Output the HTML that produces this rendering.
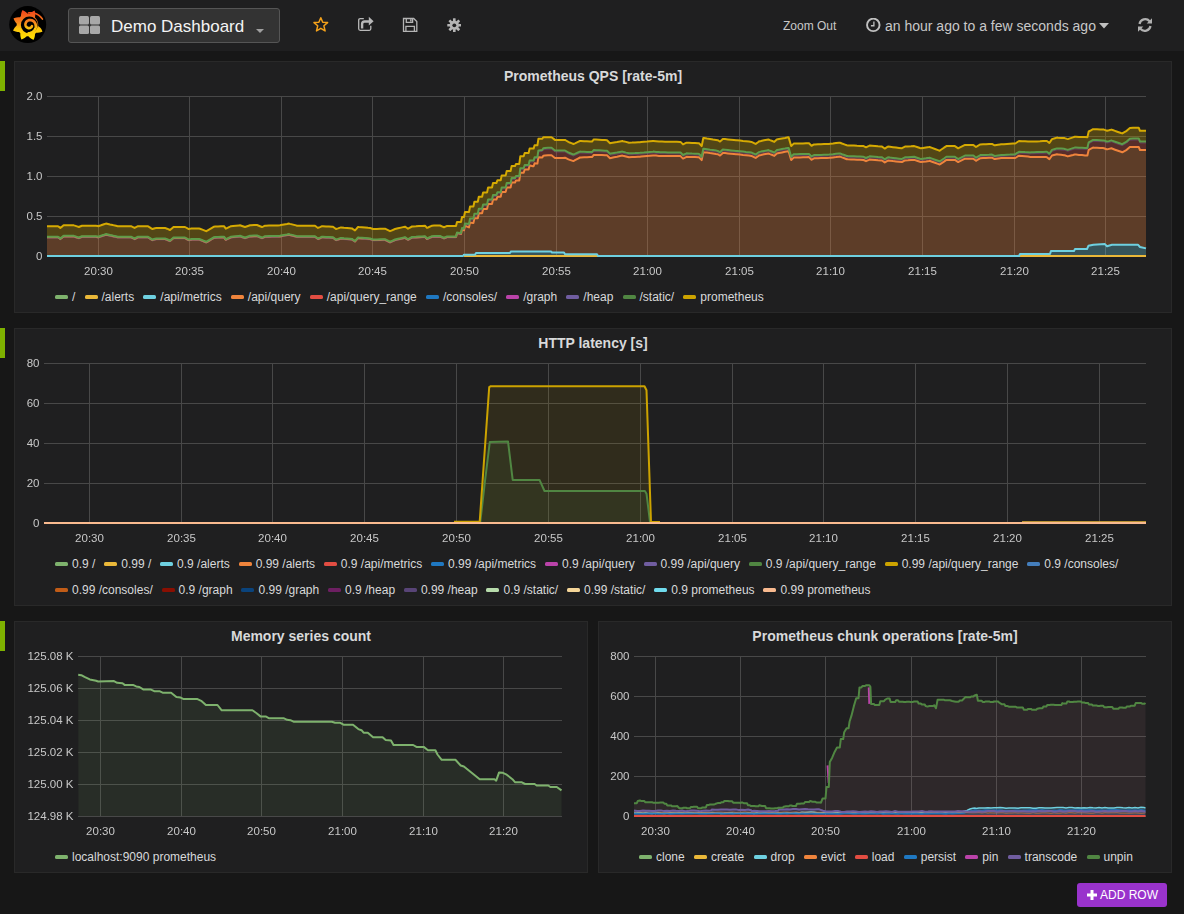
<!DOCTYPE html><html><head><meta charset="utf-8"><style>
*{box-sizing:border-box}
body{margin:0;width:1184px;height:914px;overflow:hidden;background:#171717;font-family:"Liberation Sans",sans-serif;position:relative}
.abs{position:absolute}
.nav{position:absolute;left:0;top:0;width:1184px;height:51px;background:#1f1f20}
.panel{position:absolute;background:#1f1f20;border:1px solid #292929}
.grip{position:absolute;left:0;width:5px;height:30px;background:#7eb100}
.title{position:absolute;left:0;right:0;text-align:center;font-weight:bold;font-size:14px;color:#d8d9da}
.legend{position:absolute;display:flex;flex-wrap:wrap;font-size:12px;color:#d8d9da;white-space:nowrap}
.li{display:flex;align-items:center;margin-right:9.17px;height:26px}
.sw{width:13px;height:4px;border-radius:1.5px;margin-right:4px}
svg text{font-family:"Liberation Sans",sans-serif}
</style></head><body><div class="nav"></div><svg class="abs" style="left:8px;top:5px" width="40" height="40" viewBox="0 0 40 40">
<defs><linearGradient id="lg" gradientUnits="userSpaceOnUse" x1="0" y1="6" x2="0" y2="34"><stop offset="0" stop-color="#f2461c"/><stop offset="0.4" stop-color="#f6841c"/><stop offset="0.62" stop-color="#fbc30e"/><stop offset="1" stop-color="#ffe000"/></linearGradient></defs>
<circle cx="19.7" cy="19.6" r="18.5" fill="#000"/>
<polygon points="30.20,20.00 30.20,20.09 30.20,20.18 30.20,20.27 30.19,20.36 30.19,20.44 30.19,20.53 30.18,20.62 30.18,20.71 30.17,20.80 30.16,20.89 30.21,20.98 30.25,21.08 30.30,21.17 30.46,21.28 30.65,21.40 30.84,21.52 31.02,21.65 31.20,21.77 31.38,21.90 31.54,22.04 31.71,22.17 31.87,22.31 32.03,22.45 32.18,22.59 32.32,22.73 32.47,22.88 32.60,23.03 32.74,23.18 32.86,23.33 32.99,23.48 33.08,23.63 33.17,23.78 33.26,23.93 33.35,24.08 33.43,24.24 33.52,24.39 33.60,24.55 33.68,24.71 33.76,24.87 33.84,25.04 33.91,25.20 33.99,25.37 34.06,25.54 34.13,25.71 34.19,25.88 34.26,26.05 34.32,26.23 34.39,26.40 34.45,26.58 34.32,26.68 34.14,26.75 33.97,26.81 33.79,26.88 33.62,26.94 33.45,27.00 33.27,27.06 33.10,27.11 32.92,27.16 32.75,27.21 32.57,27.26 32.40,27.30 32.23,27.35 32.05,27.39 31.88,27.42 31.71,27.46 31.53,27.49 31.36,27.52 31.19,27.55 31.02,27.57 30.85,27.60 30.68,27.62 30.51,27.63 30.34,27.65 30.17,27.66 30.00,27.67 29.83,27.68 29.66,27.69 29.50,27.69 29.33,27.69 29.17,27.69 29.00,27.69 28.84,27.68 28.67,27.67 28.51,27.66 28.35,27.65 28.26,27.71 28.20,27.78 28.13,27.85 28.06,27.92 27.99,27.99 27.92,28.06 27.85,28.13 27.78,28.20 27.71,28.26 27.63,28.33 27.56,28.40 27.49,28.46 27.41,28.53 27.34,28.59 27.26,28.66 27.19,28.72 27.11,28.78 27.03,28.84 27.02,28.99 27.02,29.15 27.02,29.31 27.01,29.47 27.00,29.64 26.99,29.80 26.98,29.97 26.96,30.13 26.95,30.30 26.93,30.47 26.91,30.63 26.88,30.80 26.85,30.97 26.83,31.14 26.79,31.31 26.76,31.48 26.72,31.65 26.68,31.81 26.64,31.98 26.60,32.15 26.55,32.32 26.50,32.49 26.45,32.66 26.40,32.83 26.34,33.00 26.28,33.17 26.22,33.34 26.16,33.51 26.09,33.68 26.02,33.85 25.95,34.02 25.88,34.19 25.80,34.36 25.72,34.53 25.64,34.70 25.56,34.87 25.40,34.85 25.23,34.77 25.06,34.70 24.89,34.62 24.72,34.54 24.56,34.46 24.39,34.37 24.23,34.29 24.07,34.20 23.91,34.12 23.76,34.03 23.60,33.93 23.45,33.84 23.30,33.75 23.15,33.65 23.00,33.55 22.86,33.45 22.72,33.35 22.58,33.25 22.44,33.15 22.30,33.04 22.16,32.93 22.03,32.83 21.90,32.72 21.77,32.61 21.65,32.50 21.52,32.38 21.40,32.27 21.28,32.15 21.16,32.04 21.04,31.92 20.93,31.80 20.82,31.68 20.71,31.56 20.60,31.44 20.49,31.31 20.39,31.29 20.30,31.30 20.20,31.30 20.10,31.30 20.00,31.30 19.90,31.30 19.80,31.30 19.70,31.30 19.61,31.29 19.51,31.29 19.41,31.28 19.31,31.28 19.21,31.27 19.11,31.27 19.02,31.26 18.92,31.25 18.82,31.24 18.72,31.23 18.61,31.32 18.50,31.43 18.38,31.54 18.26,31.66 18.14,31.77 18.01,31.88 17.89,31.98 17.76,32.09 17.63,32.20 17.50,32.30 17.36,32.40 17.23,32.50 17.09,32.60 16.95,32.70 16.81,32.80 16.67,32.89 16.52,32.99 16.37,33.08 16.22,33.17 16.07,33.26 15.92,33.35 15.76,33.43 15.61,33.52 15.45,33.60 15.29,33.68 15.13,33.76 14.96,33.84 14.80,33.91 14.63,33.99 14.46,34.06 14.29,34.13 14.12,34.19 13.95,34.26 13.77,34.32 13.60,34.39 13.42,34.45 13.32,34.32 13.25,34.14 13.19,33.97 13.12,33.79 13.06,33.62 13.00,33.45 12.94,33.27 12.89,33.10 12.84,32.92 12.79,32.75 12.74,32.57 12.70,32.40 12.65,32.23 12.61,32.05 12.58,31.88 12.54,31.71 12.51,31.53 12.48,31.36 12.45,31.19 12.43,31.02 12.40,30.85 12.38,30.68 12.37,30.51 12.35,30.34 12.34,30.17 12.33,30.00 12.32,29.83 12.31,29.66 12.31,29.50 12.31,29.33 12.31,29.17 12.31,29.00 12.32,28.84 12.33,28.67 12.34,28.51 12.35,28.35 12.29,28.26 12.22,28.20 12.15,28.13 12.08,28.06 12.01,27.99 11.94,27.92 11.87,27.85 11.80,27.78 11.74,27.71 11.67,27.63 11.60,27.56 11.54,27.49 11.47,27.41 11.41,27.34 11.34,27.26 11.28,27.19 11.22,27.11 11.16,27.03 11.01,27.02 10.85,27.02 10.69,27.02 10.53,27.01 10.36,27.00 10.20,26.99 10.03,26.98 9.87,26.96 9.70,26.95 9.53,26.93 9.37,26.91 9.20,26.88 9.03,26.85 8.86,26.83 8.69,26.79 8.52,26.76 8.35,26.72 8.19,26.68 8.02,26.64 7.85,26.60 7.68,26.55 7.51,26.50 7.34,26.45 7.17,26.40 7.00,26.34 6.83,26.28 6.66,26.22 6.49,26.16 6.32,26.09 6.15,26.02 5.98,25.95 5.81,25.88 5.64,25.80 5.47,25.72 5.30,25.64 5.13,25.56 5.15,25.40 5.23,25.23 5.30,25.06 5.38,24.89 5.46,24.72 5.54,24.56 5.63,24.39 5.71,24.23 5.80,24.07 5.88,23.91 5.97,23.76 6.07,23.60 6.16,23.45 6.25,23.30 6.35,23.15 6.45,23.00 6.55,22.86 6.65,22.72 6.75,22.58 6.85,22.44 6.96,22.30 7.07,22.16 7.17,22.03 7.28,21.90 7.39,21.77 7.50,21.65 7.62,21.52 7.73,21.40 7.85,21.28 7.96,21.16 8.08,21.04 8.20,20.93 8.32,20.82 8.44,20.71 8.56,20.60 8.69,20.49 8.71,20.39 8.70,20.30 8.70,20.20 8.70,20.10 8.70,20.00 8.70,19.90 8.70,19.80 8.70,19.70 8.71,19.61 8.71,19.51 8.72,19.41 8.72,19.31 8.73,19.21 8.73,19.11 8.74,19.02 8.75,18.92 8.76,18.82 8.77,18.72 8.68,18.61 8.57,18.50 8.46,18.38 8.34,18.26 8.23,18.14 8.12,18.01 8.02,17.89 7.91,17.76 7.80,17.63 7.70,17.50 7.60,17.36 7.50,17.23 7.40,17.09 7.30,16.95 7.20,16.81 7.11,16.67 7.01,16.52 6.92,16.37 6.83,16.22 6.74,16.07 6.65,15.92 6.57,15.76 6.48,15.61 6.40,15.45 6.32,15.29 6.24,15.13 6.16,14.96 6.09,14.80 6.01,14.63 5.94,14.46 5.87,14.29 5.81,14.12 5.74,13.95 5.68,13.77 5.61,13.60 5.55,13.42 5.68,13.32 5.86,13.25 6.03,13.19 6.21,13.12 6.38,13.06 6.55,13.00 6.73,12.94 6.90,12.89 7.08,12.84 7.25,12.79 7.43,12.74 7.60,12.70 7.77,12.65 7.95,12.61 8.12,12.58 8.29,12.54 8.47,12.51 8.64,12.48 8.81,12.45 8.98,12.43 9.15,12.40 9.32,12.38 9.49,12.37 9.66,12.35 9.83,12.34 10.00,12.33 10.17,12.32 10.34,12.31 10.50,12.31 10.67,12.31 10.83,12.31 11.00,12.31 11.16,12.32 11.33,12.33 11.49,12.34 11.65,12.35 11.74,12.29 11.80,12.22 11.87,12.15 11.94,12.08 12.01,12.01 12.08,11.94 12.15,11.87 12.22,11.80 12.29,11.74 12.37,11.67 12.44,11.60 12.51,11.54 12.59,11.47 12.66,11.41 12.74,11.34 12.81,11.28 12.89,11.22 12.97,11.16 12.98,11.01 12.98,10.85 12.98,10.69 12.99,10.53 13.00,10.36 13.01,10.20 13.02,10.03 13.04,9.87 13.05,9.70 13.07,9.53 13.09,9.37 13.12,9.20 13.15,9.03 13.17,8.86 13.21,8.69 13.24,8.52 13.28,8.35 13.32,8.19 13.36,8.02 13.40,7.85 13.45,7.68 13.50,7.51 13.55,7.34 13.60,7.17 13.66,7.00 13.72,6.83 13.78,6.66 13.84,6.49 13.91,6.32 13.98,6.15 14.05,5.98 14.12,5.81 14.20,5.64 14.28,5.47 14.36,5.30 14.44,5.13 14.60,5.15 14.77,5.23 14.94,5.30 15.11,5.38 15.28,5.46 15.44,5.54 15.61,5.63 15.77,5.71 15.93,5.80 16.09,5.88 16.24,5.97 16.40,6.07 16.55,6.16 16.70,6.25 16.85,6.35 17.00,6.45 17.14,6.55 17.28,6.65 17.42,6.75 17.56,6.85 17.70,6.96 17.84,7.07 17.97,7.17 18.10,7.28 18.23,7.39 18.35,7.50 18.48,7.62 18.60,7.73 18.72,7.85 18.84,7.96 18.96,8.08 19.07,8.20 19.18,8.32 19.29,8.44 19.40,8.56 19.51,8.69 19.61,8.71 19.70,8.70 19.80,8.70 19.90,8.70 20.00,8.70 20.10,8.70 20.20,8.70 20.30,8.70 20.39,8.71 20.49,8.71 20.59,8.72 20.69,8.72 20.79,8.73 20.89,8.73 20.98,8.74 21.08,8.79 21.17,8.83 21.27,8.88 21.37,8.83 21.48,8.74 21.59,8.66 21.71,8.57 21.82,8.48 21.94,8.40 22.06,8.31 22.18,8.22 22.31,8.13 22.43,8.04 22.56,7.95 22.69,7.86 22.82,7.76 22.96,7.67 23.10,7.58 23.24,7.48 23.38,7.39 23.52,7.29 23.67,7.20 23.82,7.10 23.97,7.01 24.13,6.91 24.28,6.81 24.44,6.72 24.61,6.62 24.77,6.52 24.94,6.43 25.11,6.32 25.29,6.22 25.47,6.12 25.65,6.02 25.83,5.92 26.01,5.83 26.20,5.74 26.39,5.65 26.58,5.56 26.67,5.70 26.72,5.91 26.78,6.11 26.83,6.31 26.87,6.51 26.92,6.71 26.96,6.91 27.00,7.11 27.03,7.31 27.07,7.51 27.10,7.71 27.12,7.91 27.15,8.11 27.17,8.31 27.18,8.50 27.20,8.70 27.21,8.90 27.22,9.09 27.23,9.29 27.23,9.48 27.23,9.67 27.23,9.87 27.22,10.06 27.22,10.25 27.21,10.44 27.19,10.63 27.18,10.81 27.16,11.00 27.14,11.19 27.11,11.37 27.09,11.56 27.06,11.74 27.02,11.92 26.99,12.10 26.95,12.28 26.91,12.46 26.96,12.54 27.02,12.60 27.09,12.66 27.15,12.72 27.21,12.79 27.28,12.85 27.34,12.91 27.40,12.98 27.46,13.04 27.52,13.11 27.58,13.17 27.64,13.24 27.70,13.31 27.76,13.38 27.81,13.44 27.87,13.51 27.93,13.58 27.98,13.65 28.04,13.72 28.09,13.79 28.15,13.86 28.20,13.93 28.25,14.00 28.30,14.08 28.36,14.15 28.41,14.22 28.46,14.30 28.51,14.37 28.55,14.44 28.60,14.52 28.65,14.59 28.70,14.67 28.74,14.75 28.79,14.82 28.83,14.90 28.88,14.98 28.92,15.05 28.96,15.13 29.01,15.21 29.05,15.29 29.09,15.37 29.13,15.45 29.17,15.53 29.21,15.61 29.24,15.69 29.28,15.77 29.32,15.85 29.35,15.93 29.39,16.01 29.42,16.10 29.46,16.18 29.49,16.26 29.52,16.34 29.55,16.43 29.58,16.51 29.61,16.60 29.64,16.68 29.67,16.76 29.70,16.85 29.73,16.93 29.75,17.02 29.78,17.10 29.80,17.19 29.83,17.27 29.85,17.36 29.88,17.45 29.90,17.53 29.92,17.62 29.94,17.71 29.96,17.79 29.98,17.88 30.00,17.97 30.01,18.05 30.03,18.14 30.05,18.23 30.06,18.32 30.07,18.40 30.09,18.49 30.10,18.58 30.11,18.67 30.12,18.76 30.13,18.85 30.14,18.93 30.15,19.02 30.16,19.11 30.17,19.20 30.18,19.29 30.18,19.38 30.19,19.47 30.19,19.56 30.19,19.64 30.20,19.73 30.20,19.82 30.20,19.91" fill="url(#lg)"/>
<circle cx="21.3" cy="20" r="8.4" fill="#000"/>
<polyline points="23.93,21.23 23.80,21.47 23.66,21.70 23.50,21.92 23.31,22.12 23.11,22.31 22.90,22.48 22.66,22.64 22.42,22.77 22.16,22.88 21.89,22.97 21.61,23.04 21.33,23.08 21.04,23.10 20.74,23.09 20.45,23.05 20.15,22.99 19.86,22.90 19.58,22.79 19.30,22.64 19.03,22.47 18.78,22.28 18.54,22.06 18.33,21.81 18.13,21.55 17.95,21.26 17.80,20.95 17.68,20.63 17.58,20.29 17.52,19.94 17.48,19.58 17.48,19.21 17.52,18.84 17.59,18.47 17.69,18.10 17.83,17.74 18.01,17.38 18.22,17.04 18.47,16.71 18.75,16.40 19.06,16.12 19.40,15.86 19.78,15.63 20.17,15.44 20.59,15.28 21.04,15.15 21.49,15.07 21.96,15.03 22.45,15.04 22.93,15.09 23.42,15.19 23.90,15.33 24.38,15.52 24.84,15.76 25.28,16.05 25.71,16.38 26.10,16.76 26.47,17.18 26.80,17.64 27.09,18.13 27.33,18.66 27.53,19.22 27.67,19.81 27.76,20.41 27.80,21.03 27.78,21.66 27.69,22.29 27.54,22.93 27.34,23.56 27.06,24.17 26.73,24.76 26.34,25.33 25.89,25.87 25.38,26.37 24.82,26.83 24.20,27.24 23.55,27.59 22.85,27.88 22.12,28.11 21.35,28.28 20.57,28.37" fill="none" stroke="url(#lg)" stroke-width="2.7" stroke-linecap="round"/>
<polyline points="20.42,8.01 21.01,7.89 21.61,7.81 22.22,7.75 22.83,7.72 23.46,7.73 24.09,7.77 24.73,7.84 25.37,7.94 26.01,8.08 26.65,8.25 27.28,8.46 27.92,8.70 28.54,8.97 29.16,9.28 29.76,9.62 30.36,10.00 30.94,10.41 31.50,10.85 32.05,11.32 32.58,11.83 33.09,12.37 33.57,12.94 34.03,13.53 34.46,14.16" fill="none" stroke="url(#lg)" stroke-width="1.6" stroke-linecap="round"/>
</svg><div class="abs" style="left:68px;top:8px;width:212px;height:35px;background:#333;border:1px solid #555;border-radius:3px"></div><svg class="abs" style="left:79px;top:16px" width="22" height="19"><g fill="#a8a8a8">
<rect x="0" y="0" width="10" height="8.5" rx="1.5"/><rect x="11" y="0" width="10" height="8.5" rx="1.5"/>
<rect x="0" y="9.5" width="10" height="8.5" rx="1.5"/><rect x="11" y="9.5" width="10" height="8.5" rx="1.5"/></g></svg><div class="abs" style="left:111px;top:17px;font-size:17px;color:#f4f4f4;line-height:20px">Demo Dashboard</div><svg class="abs" style="left:256px;top:29px" width="9" height="5"><path d="M0 0h8l-4 4z" fill="#a0a0a0"/></svg><svg class="abs" style="left:312px;top:16px" width="18" height="18" viewBox="0 0 18 18"><path d="M8.8 1.8 10.75 6.2 15.6 6.6 11.9 9.8 13.1 14.9 8.8 12.3 4.5 14.9 5.7 9.8 2 6.6 6.85 6.2z" fill="none" stroke="#f4a11a" stroke-width="1.5" stroke-linejoin="round"/></svg><svg class="abs" style="left:352px;top:12px" width="26" height="24" viewBox="0 0 26 24"><g fill="none" stroke="#b8b8b8"><path d="M11.8 6.7H8.2Q6.7 6.7 6.7 8.2V16.8Q6.7 18.3 8.2 18.3H17.3Q18.8 18.3 18.8 16.8V13.7" stroke-width="1.3"/><path d="M10.1 16.4V12.1Q10.1 9.45 12.7 9.45H17.6" stroke-width="2.4"/></g><path d="M16.8 4.8 21.6 9.3 16.8 13.5z" fill="#b8b8b8"/></svg><svg class="abs" style="left:402px;top:17px" width="16" height="16" viewBox="0 0 16 16"><g fill="none" stroke="#b4b4b4" stroke-width="1.3"><path d="M1.5 1.5H11.7L14.8 4.6V14.3H1.5z"/><path d="M4.3 1.5V5.3H10.6V1.5"/><path d="M3.9 14.3V9.3H12.4V14.3"/></g><rect x="8.1" y="2.2" width="1.5" height="2.4" fill="#b4b4b4"/></svg><svg class="abs" style="left:446.7px;top:17.7px" width="14.6" height="14.6" viewBox="0 0 16 16"><g fill="#b4b4b4"><rect x="6.55" y="0.3" width="2.9" height="3.5" rx="0.4" transform="rotate(0 8 8)"/><rect x="6.55" y="0.3" width="2.9" height="3.5" rx="0.4" transform="rotate(45 8 8)"/><rect x="6.55" y="0.3" width="2.9" height="3.5" rx="0.4" transform="rotate(90 8 8)"/><rect x="6.55" y="0.3" width="2.9" height="3.5" rx="0.4" transform="rotate(135 8 8)"/><rect x="6.55" y="0.3" width="2.9" height="3.5" rx="0.4" transform="rotate(180 8 8)"/><rect x="6.55" y="0.3" width="2.9" height="3.5" rx="0.4" transform="rotate(225 8 8)"/><rect x="6.55" y="0.3" width="2.9" height="3.5" rx="0.4" transform="rotate(270 8 8)"/><rect x="6.55" y="0.3" width="2.9" height="3.5" rx="0.4" transform="rotate(315 8 8)"/><circle cx="8" cy="8" r="5.1"/></g><circle cx="8" cy="8" r="2.1" fill="#1f1f20"/></svg><div class="abs" style="left:783px;top:19px;font-size:12px;color:#c8c8c8;line-height:15px">Zoom Out</div><svg class="abs" style="left:866px;top:18px" width="15" height="15" viewBox="0 0 15 15"><circle cx="7.3" cy="6.9" r="6.25" fill="none" stroke="#c0c0c0" stroke-width="1.9"/><path d="M7.9 3.6V7.75H4.9" fill="none" stroke="#c0c0c0" stroke-width="1.3"/></svg><div class="abs" style="left:885px;top:17px;font-size:14px;color:#c8c8c8;line-height:18px">an hour ago to a few seconds ago</div><svg class="abs" style="left:1099px;top:23px" width="10" height="6"><path d="M0 0h10l-5 5.5z" fill="#c0c0c0"/></svg><svg class="abs" style="left:1137px;top:17px" width="16" height="16" viewBox="0 0 16 16"><path d="M2.5 7A5.8 5.8 0 0 1 12.6 4.2" fill="none" stroke="#b0b0b0" stroke-width="2.2"/><path d="M15 1.2V6.5H9.7z" fill="#b0b0b0"/><path d="M13.5 9A5.8 5.8 0 0 1 3.4 11.8" fill="none" stroke="#b0b0b0" stroke-width="2.2"/><path d="M1 14.8V9.5H6.3z" fill="#b0b0b0"/></svg><div class="grip" style="top:61px"></div><div class="panel" style="left:14px;top:61px;width:1158px;height:252px"></div><div class="title" style="left:14px;width:1158px;top:68px;line-height:16px">Prometheus QPS [rate-5m]</div><div class="grip" style="top:328px"></div><div class="panel" style="left:14px;top:328px;width:1158px;height:278px"></div><div class="title" style="left:14px;width:1158px;top:335px;line-height:16px">HTTP latency [s]</div><div class="grip" style="top:621px"></div><div class="panel" style="left:14px;top:621px;width:574px;height:252px"></div><div class="title" style="left:14px;width:574px;top:628px;line-height:16px">Memory series count</div><div class="panel" style="left:598px;top:621px;width:574px;height:252px"></div><div class="title" style="left:598px;width:574px;top:628px;line-height:16px">Prometheus chunk operations [rate-5m]</div><svg class="abs" style="left:0;top:0" width="1184" height="914"><line x1="47" y1="96.5" x2="1146" y2="96.5" stroke="#484848" stroke-width="1"/><line x1="47" y1="136.5" x2="1146" y2="136.5" stroke="#484848" stroke-width="1"/><line x1="47" y1="176.5" x2="1146" y2="176.5" stroke="#484848" stroke-width="1"/><line x1="47" y1="216.5" x2="1146" y2="216.5" stroke="#484848" stroke-width="1"/><line x1="47" y1="256.5" x2="1146" y2="256.5" stroke="#484848" stroke-width="1"/><line x1="98.5" y1="96.5" x2="98.5" y2="256.5" stroke="#484848" stroke-width="1"/><line x1="189.5" y1="96.5" x2="189.5" y2="256.5" stroke="#484848" stroke-width="1"/><line x1="281.5" y1="96.5" x2="281.5" y2="256.5" stroke="#484848" stroke-width="1"/><line x1="372.5" y1="96.5" x2="372.5" y2="256.5" stroke="#484848" stroke-width="1"/><line x1="464.5" y1="96.5" x2="464.5" y2="256.5" stroke="#484848" stroke-width="1"/><line x1="556.5" y1="96.5" x2="556.5" y2="256.5" stroke="#484848" stroke-width="1"/><line x1="647.5" y1="96.5" x2="647.5" y2="256.5" stroke="#484848" stroke-width="1"/><line x1="739.5" y1="96.5" x2="739.5" y2="256.5" stroke="#484848" stroke-width="1"/><line x1="830.5" y1="96.5" x2="830.5" y2="256.5" stroke="#484848" stroke-width="1"/><line x1="922.5" y1="96.5" x2="922.5" y2="256.5" stroke="#484848" stroke-width="1"/><line x1="1014.5" y1="96.5" x2="1014.5" y2="256.5" stroke="#484848" stroke-width="1"/><line x1="1105.5" y1="96.5" x2="1105.5" y2="256.5" stroke="#484848" stroke-width="1"/><line x1="44" y1="363.5" x2="1146" y2="363.5" stroke="#484848" stroke-width="1"/><line x1="44" y1="403.5" x2="1146" y2="403.5" stroke="#484848" stroke-width="1"/><line x1="44" y1="443.5" x2="1146" y2="443.5" stroke="#484848" stroke-width="1"/><line x1="44" y1="483.5" x2="1146" y2="483.5" stroke="#484848" stroke-width="1"/><line x1="44" y1="523.5" x2="1146" y2="523.5" stroke="#484848" stroke-width="1"/><line x1="89.5" y1="363.5" x2="89.5" y2="523.5" stroke="#484848" stroke-width="1"/><line x1="181.5" y1="363.5" x2="181.5" y2="523.5" stroke="#484848" stroke-width="1"/><line x1="272.5" y1="363.5" x2="272.5" y2="523.5" stroke="#484848" stroke-width="1"/><line x1="364.5" y1="363.5" x2="364.5" y2="523.5" stroke="#484848" stroke-width="1"/><line x1="456.5" y1="363.5" x2="456.5" y2="523.5" stroke="#484848" stroke-width="1"/><line x1="548.5" y1="363.5" x2="548.5" y2="523.5" stroke="#484848" stroke-width="1"/><line x1="640.5" y1="363.5" x2="640.5" y2="523.5" stroke="#484848" stroke-width="1"/><line x1="732.5" y1="363.5" x2="732.5" y2="523.5" stroke="#484848" stroke-width="1"/><line x1="823.5" y1="363.5" x2="823.5" y2="523.5" stroke="#484848" stroke-width="1"/><line x1="915.5" y1="363.5" x2="915.5" y2="523.5" stroke="#484848" stroke-width="1"/><line x1="1007.5" y1="363.5" x2="1007.5" y2="523.5" stroke="#484848" stroke-width="1"/><line x1="1099.5" y1="363.5" x2="1099.5" y2="523.5" stroke="#484848" stroke-width="1"/><line x1="78" y1="656.5" x2="562" y2="656.5" stroke="#484848" stroke-width="1"/><line x1="78" y1="688.5" x2="562" y2="688.5" stroke="#484848" stroke-width="1"/><line x1="78" y1="720.5" x2="562" y2="720.5" stroke="#484848" stroke-width="1"/><line x1="78" y1="752.5" x2="562" y2="752.5" stroke="#484848" stroke-width="1"/><line x1="78" y1="784.5" x2="562" y2="784.5" stroke="#484848" stroke-width="1"/><line x1="78" y1="816.5" x2="562" y2="816.5" stroke="#484848" stroke-width="1"/><line x1="100.5" y1="656.5" x2="100.5" y2="816.5" stroke="#484848" stroke-width="1"/><line x1="181.5" y1="656.5" x2="181.5" y2="816.5" stroke="#484848" stroke-width="1"/><line x1="261.5" y1="656.5" x2="261.5" y2="816.5" stroke="#484848" stroke-width="1"/><line x1="342.5" y1="656.5" x2="342.5" y2="816.5" stroke="#484848" stroke-width="1"/><line x1="423.5" y1="656.5" x2="423.5" y2="816.5" stroke="#484848" stroke-width="1"/><line x1="503.5" y1="656.5" x2="503.5" y2="816.5" stroke="#484848" stroke-width="1"/><line x1="634" y1="656.5" x2="1146" y2="656.5" stroke="#484848" stroke-width="1"/><line x1="634" y1="696.5" x2="1146" y2="696.5" stroke="#484848" stroke-width="1"/><line x1="634" y1="736.5" x2="1146" y2="736.5" stroke="#484848" stroke-width="1"/><line x1="634" y1="776.5" x2="1146" y2="776.5" stroke="#484848" stroke-width="1"/><line x1="634" y1="816.5" x2="1146" y2="816.5" stroke="#484848" stroke-width="1"/><line x1="655.5" y1="656.5" x2="655.5" y2="816.5" stroke="#484848" stroke-width="1"/><line x1="740.5" y1="656.5" x2="740.5" y2="816.5" stroke="#484848" stroke-width="1"/><line x1="825.5" y1="656.5" x2="825.5" y2="816.5" stroke="#484848" stroke-width="1"/><line x1="911.5" y1="656.5" x2="911.5" y2="816.5" stroke="#484848" stroke-width="1"/><line x1="996.5" y1="656.5" x2="996.5" y2="816.5" stroke="#484848" stroke-width="1"/><line x1="1081.5" y1="656.5" x2="1081.5" y2="816.5" stroke="#484848" stroke-width="1"/><polygon points="47.0,256.5 47.0,256.0 463.0,256.0 464.0,254.7 475.0,254.7 476.0,253.0 510.0,253.0 511.0,251.4 551.0,251.4 552.0,252.5 564.0,252.5 565.0,254.2 597.0,254.2 598.0,256.0 1019.0,256.0 1020.0,254.0 1050.0,254.0 1051.0,250.9 1074.0,250.9 1075.0,249.1 1087.0,249.1 1088.4,245.8 1093.4,244.7 1104.9,244.1 1107.0,246.3 1112.0,244.7 1137.9,244.7 1140.0,247.0 1146.0,248.4 1146.0,256.5" fill="#6ed0e0" fill-opacity="0.3"/><polygon points="47.0,256.0 463.0,256.0 464.0,254.7 475.0,254.7 476.0,253.0 510.0,253.0 511.0,251.4 551.0,251.4 552.0,252.5 564.0,252.5 565.0,254.2 597.0,254.2 598.0,256.0 1019.0,256.0 1020.0,254.0 1050.0,254.0 1051.0,250.9 1074.0,250.9 1075.0,249.1 1087.0,249.1 1088.4,245.8 1093.4,244.7 1104.9,244.1 1107.0,246.3 1112.0,244.7 1137.9,244.7 1140.0,247.0 1146.0,248.4 1146.0,150.1 1145.0,150.1 1142.0,150.0 1140.0,150.0 1139.0,147.6 1138.7,146.9 1136.0,146.9 1133.0,146.9 1130.0,146.9 1129.9,146.9 1127.0,149.5 1126.7,149.8 1124.0,151.3 1122.3,152.3 1121.0,151.8 1118.0,150.8 1116.6,150.3 1115.0,149.7 1112.0,148.5 1111.5,148.3 1109.0,148.9 1107.0,149.4 1106.0,149.0 1103.9,148.2 1103.0,148.1 1100.0,148.0 1097.0,147.8 1094.0,147.7 1093.0,147.6 1091.0,148.6 1088.7,149.8 1088.0,152.9 1087.4,155.5 1085.0,155.4 1082.0,155.1 1079.0,154.9 1076.0,154.6 1074.7,154.5 1073.0,155.0 1070.0,155.8 1067.8,156.4 1067.0,156.1 1064.6,155.2 1064.0,155.2 1061.0,154.8 1058.0,154.4 1057.0,154.3 1055.0,154.8 1052.0,155.5 1049.4,159.2 1049.0,158.9 1046.9,157.2 1046.0,157.1 1043.0,157.1 1040.0,157.0 1037.0,157.0 1034.0,156.9 1031.0,156.9 1030.4,156.9 1028.0,156.6 1025.0,156.3 1022.0,156.0 1019.0,155.7 1016.0,157.5 1015.2,158.0 1013.0,158.0 1010.0,158.1 1007.0,158.1 1004.0,158.1 1001.0,158.1 1000.0,158.2 998.0,158.5 995.0,159.0 994.6,159.1 992.0,157.7 989.0,157.8 986.0,157.9 983.0,158.0 980.2,158.2 980.0,158.3 977.0,160.2 976.0,160.8 974.0,159.2 973.4,158.7 971.0,158.7 968.0,158.7 965.0,158.7 962.0,160.2 959.0,161.7 958.2,162.1 956.0,160.6 954.9,159.9 953.0,159.9 950.0,159.9 947.0,159.9 946.4,159.9 944.0,161.6 941.0,163.6 939.7,164.5 938.0,163.9 935.0,162.8 932.0,161.7 929.5,160.8 929.0,160.9 926.0,161.4 923.0,161.8 921.0,162.1 920.0,161.8 917.0,160.8 914.3,159.9 914.0,160.0 911.0,160.1 908.0,160.3 905.0,160.4 902.0,162.0 901.7,162.1 899.0,161.8 896.0,161.4 893.0,161.1 890.0,160.7 888.0,160.5 887.0,161.1 884.8,162.5 884.0,161.9 882.0,160.5 881.0,160.4 878.0,160.2 875.0,159.9 872.0,159.7 869.6,159.5 869.0,159.8 866.0,161.2 863.6,160.0 863.0,160.0 860.0,159.8 857.0,159.7 854.0,159.5 851.0,159.4 848.0,159.3 846.8,159.2 845.0,158.5 842.0,157.4 840.0,156.6 839.0,156.7 836.0,157.1 833.0,157.4 830.0,157.7 829.2,157.8 827.0,157.9 824.0,158.0 821.0,158.1 818.0,158.2 815.0,158.3 814.0,158.3 812.0,159.5 811.5,159.7 809.0,157.1 806.0,157.2 803.0,157.3 800.0,157.4 797.0,157.5 794.0,157.5 793.7,157.6 791.2,160.1 791.0,159.4 788.6,151.2 788.0,151.3 785.0,151.8 782.0,152.4 779.0,153.0 776.8,153.4 776.0,154.2 774.3,155.9 773.0,155.3 770.0,154.1 768.4,153.4 767.0,153.7 764.0,154.3 761.0,155.0 759.0,155.4 758.0,156.2 755.7,157.9 755.0,157.6 752.0,156.1 751.5,155.9 749.0,155.6 746.0,155.3 743.0,155.0 740.0,154.6 737.0,154.3 736.0,154.2 734.0,154.0 731.0,153.7 728.0,153.4 725.0,153.1 722.8,152.9 722.0,153.7 720.0,155.6 719.0,155.0 717.7,154.2 716.0,154.0 713.0,153.5 710.0,153.1 707.0,152.6 704.0,152.2 703.3,152.0 701.7,160.1 701.0,159.4 699.0,157.3 698.0,157.2 695.0,157.1 692.0,157.0 689.0,156.9 686.5,156.8 686.0,157.1 683.0,158.6 680.5,156.1 680.0,156.1 677.0,156.1 674.0,156.0 671.0,156.0 668.0,156.0 665.0,156.0 662.0,156.0 660.0,155.9 659.0,155.9 656.0,155.6 653.5,155.4 653.0,155.4 650.0,155.7 647.0,156.0 644.0,156.3 641.0,156.6 640.0,156.7 638.0,156.8 635.0,156.9 632.0,157.1 629.0,157.3 626.0,156.5 623.0,155.8 622.4,155.6 620.0,156.0 617.0,156.7 614.0,157.3 611.0,157.9 610.0,158.2 608.0,156.2 607.0,155.3 605.0,155.2 602.0,155.1 599.0,155.0 596.0,155.0 593.7,154.9 593.0,155.8 592.0,157.0 590.0,157.0 587.0,157.2 584.0,157.3 581.0,157.5 580.0,157.5 578.0,158.6 575.0,160.2 573.4,161.1 572.0,160.6 569.0,159.6 568.4,159.4 566.0,158.2 565.0,157.7 563.0,157.9 560.0,158.0 557.0,158.0 555.0,158.0 554.0,157.2 551.5,155.3 551.0,155.3 548.0,155.3 545.0,155.6 543.3,155.8 542.3,157.5 542.0,157.5 539.0,157.2 538.4,157.2 537.4,163.6 536.0,163.4 534.6,163.2 533.6,166.3 533.0,166.2 530.0,165.5 529.6,165.4 528.6,169.6 527.0,169.5 524.7,169.5 524.0,171.8 523.7,172.8 521.0,172.8 520.3,172.8 519.3,180.4 518.0,180.4 516.0,180.4 515.0,182.6 512.0,182.6 511.6,182.6 510.6,187.5 509.0,187.5 506.7,187.5 506.0,190.6 505.7,191.9 503.0,191.9 501.7,191.9 500.7,196.8 500.0,196.8 497.4,196.8 497.0,197.9 496.4,199.6 494.0,199.6 493.0,199.6 492.0,203.9 491.0,203.9 488.1,203.9 488.0,204.4 487.1,208.9 485.0,208.9 483.1,208.9 482.1,213.2 482.0,213.2 479.0,213.2 478.8,213.2 477.8,218.2 476.0,218.2 474.4,218.2 473.4,223.1 473.0,223.1 470.0,222.4 469.0,227.4 467.0,226.6 465.0,225.7 464.0,230.3 462.0,229.4 461.0,234.0 458.0,233.3 457.0,233.2 456.0,237.1 455.0,237.1 452.0,237.1 449.0,237.1 447.0,237.1 446.0,237.5 444.0,238.3 443.0,237.9 440.0,236.6 437.0,236.7 434.0,236.7 432.0,236.8 431.0,237.2 428.0,238.6 427.0,239.0 425.0,236.8 422.0,237.0 419.0,237.2 416.0,237.4 413.0,237.5 412.0,237.6 410.0,238.7 408.0,239.8 407.0,239.1 405.0,237.8 404.0,238.0 401.0,238.7 398.0,239.4 395.0,240.1 392.0,241.4 390.0,242.3 389.0,241.8 386.0,240.3 385.0,239.8 383.0,239.8 380.0,239.9 377.0,240.0 374.0,240.1 373.0,240.1 371.0,239.4 370.0,239.0 368.0,238.8 365.0,238.6 362.0,238.4 359.0,238.2 358.0,238.1 356.0,240.4 355.0,241.5 353.0,240.2 352.0,239.5 350.0,239.3 347.0,239.0 344.0,238.8 341.0,238.5 338.0,239.5 336.0,240.1 335.0,239.3 333.0,237.8 332.0,237.8 329.0,237.6 326.0,237.5 323.0,237.3 322.0,237.3 320.0,238.2 318.0,239.0 317.0,238.3 315.0,236.8 314.0,236.8 311.0,236.8 308.0,236.8 305.0,236.8 302.0,236.8 299.0,236.8 297.0,236.8 296.0,236.5 293.0,235.7 290.0,235.0 289.0,234.7 287.0,235.1 284.0,235.6 281.0,236.2 280.0,236.4 278.0,236.5 275.0,236.5 272.0,236.6 269.0,236.7 266.0,236.8 265.0,236.8 263.0,237.7 262.0,238.1 260.0,237.3 257.0,236.1 254.0,236.2 251.0,236.4 250.0,236.4 248.0,237.1 245.0,238.1 242.0,237.1 240.0,236.4 239.0,236.5 236.0,236.8 233.0,237.1 231.0,237.3 230.0,237.8 227.0,239.2 225.8,239.8 224.0,237.3 221.0,237.4 218.0,237.6 215.0,237.7 214.0,237.8 212.0,239.0 209.0,240.8 206.4,242.3 206.0,242.2 203.0,241.0 200.0,239.9 198.8,239.5 197.0,239.5 194.0,239.5 192.0,239.5 191.0,239.7 188.6,240.1 188.0,239.8 185.0,238.1 182.0,238.1 179.0,238.1 176.0,238.1 173.4,238.1 173.0,238.5 170.0,241.1 167.0,239.8 165.0,239.0 164.0,239.0 161.0,239.0 158.0,239.0 156.5,239.0 155.0,239.4 152.3,240.1 152.0,239.9 149.0,238.0 148.0,237.3 146.0,237.3 143.0,237.3 140.0,237.3 138.0,237.3 137.0,237.8 134.6,239.0 134.0,238.7 131.0,237.3 128.0,237.3 125.0,237.3 122.0,237.3 119.0,237.3 117.7,237.3 116.0,236.9 113.0,236.2 112.6,236.1 110.0,235.6 107.0,234.9 105.9,234.7 104.0,235.3 101.0,236.4 98.3,237.3 98.0,237.2 95.7,236.8 95.0,236.8 92.0,236.8 89.0,236.8 86.0,236.8 83.0,236.8 82.0,236.8 80.0,237.6 78.9,238.1 77.0,237.5 74.0,236.5 73.8,236.4 71.0,236.4 68.0,236.4 65.0,236.4 63.6,236.4 62.0,237.7 60.3,239.0 59.0,238.0 58.0,237.3 56.0,237.3 53.0,237.3 50.0,237.3 47.0,237.3" fill="#ef843c" fill-opacity="0.3"/><polygon points="47.0,237.3 50.0,237.3 53.0,237.3 56.0,237.3 58.0,237.3 59.0,238.0 60.3,239.0 62.0,237.7 63.6,236.4 65.0,236.4 68.0,236.4 71.0,236.4 73.8,236.4 74.0,236.5 77.0,237.5 78.9,238.1 80.0,237.6 82.0,236.8 83.0,236.8 86.0,236.8 89.0,236.8 92.0,236.8 95.0,236.8 95.7,236.8 98.0,237.2 98.3,237.3 101.0,236.4 104.0,235.3 105.9,234.7 107.0,234.9 110.0,235.6 112.6,236.1 113.0,236.2 116.0,236.9 117.7,237.3 119.0,237.3 122.0,237.3 125.0,237.3 128.0,237.3 131.0,237.3 134.0,238.7 134.6,239.0 137.0,237.8 138.0,237.3 140.0,237.3 143.0,237.3 146.0,237.3 148.0,237.3 149.0,238.0 152.0,239.9 152.3,240.1 155.0,239.4 156.5,239.0 158.0,239.0 161.0,239.0 164.0,239.0 165.0,239.0 167.0,239.8 170.0,241.1 173.0,238.5 173.4,238.1 176.0,238.1 179.0,238.1 182.0,238.1 185.0,238.1 188.0,239.8 188.6,240.1 191.0,239.7 192.0,239.5 194.0,239.5 197.0,239.5 198.8,239.5 200.0,239.9 203.0,241.0 206.0,242.2 206.4,242.3 209.0,240.8 212.0,239.0 214.0,237.8 215.0,237.7 218.0,237.6 221.0,237.4 224.0,237.3 225.8,239.8 227.0,239.2 230.0,237.8 231.0,237.3 233.0,237.1 236.0,236.8 239.0,236.5 240.0,236.4 242.0,237.1 245.0,238.1 248.0,237.1 250.0,236.4 251.0,236.4 254.0,236.2 257.0,236.1 260.0,237.3 262.0,238.1 263.0,237.7 265.0,236.8 266.0,236.8 269.0,236.7 272.0,236.6 275.0,236.5 278.0,236.5 280.0,236.4 281.0,236.2 284.0,235.6 287.0,235.1 289.0,234.7 290.0,235.0 293.0,235.7 296.0,236.5 297.0,236.8 299.0,236.8 302.0,236.8 305.0,236.8 308.0,236.8 311.0,236.8 314.0,236.8 315.0,236.8 317.0,238.3 318.0,239.0 320.0,238.2 322.0,237.3 323.0,237.3 326.0,237.5 329.0,237.6 332.0,237.8 333.0,237.8 335.0,239.3 336.0,240.1 338.0,239.5 341.0,238.5 344.0,238.8 347.0,239.0 350.0,239.3 352.0,239.5 353.0,240.2 355.0,241.5 356.0,240.4 358.0,238.1 359.0,238.2 362.0,238.4 365.0,238.6 368.0,238.8 370.0,239.0 371.0,239.4 373.0,240.1 374.0,240.1 377.0,240.0 380.0,239.9 383.0,239.8 385.0,239.8 386.0,240.3 389.0,241.8 390.0,242.3 392.0,241.4 395.0,240.1 398.0,239.4 401.0,238.7 404.0,238.0 405.0,237.8 407.0,239.1 408.0,239.8 410.0,238.7 412.0,237.6 413.0,237.5 416.0,237.4 419.0,237.2 422.0,237.0 425.0,236.8 427.0,239.0 428.0,238.6 431.0,237.2 432.0,236.8 434.0,236.7 437.0,236.7 440.0,236.6 443.0,237.9 444.0,238.3 446.0,237.5 447.0,237.1 449.0,237.1 452.0,237.1 455.0,237.1 456.0,237.1 457.0,233.2 458.0,233.3 461.0,234.0 462.0,229.4 464.0,230.3 465.0,225.7 467.0,226.6 469.0,227.4 470.0,222.4 473.0,223.1 473.4,223.1 474.4,218.2 476.0,218.2 477.8,218.2 478.8,213.2 479.0,213.2 482.0,213.2 482.1,213.2 483.1,208.9 485.0,208.9 487.1,208.9 488.0,204.4 488.1,203.9 491.0,203.9 492.0,203.9 493.0,199.6 494.0,199.6 496.4,199.6 497.0,197.9 497.4,196.8 500.0,196.8 500.7,196.8 501.7,191.9 503.0,191.9 505.7,191.9 506.0,190.6 506.7,187.5 509.0,187.5 510.6,187.5 511.6,182.6 512.0,182.6 515.0,182.6 516.0,180.4 518.0,180.4 519.3,180.4 520.3,172.8 521.0,172.8 523.7,172.8 524.0,171.8 524.7,169.5 527.0,169.5 528.6,169.6 529.6,165.4 530.0,165.5 533.0,166.2 533.6,166.3 534.6,163.2 536.0,163.4 537.4,163.6 538.4,157.2 539.0,157.2 542.0,157.5 542.3,157.5 543.3,155.8 545.0,155.6 548.0,155.3 551.0,155.3 551.5,155.3 554.0,157.2 555.0,158.0 557.0,158.0 560.0,158.0 563.0,157.9 565.0,157.7 566.0,158.2 568.4,159.4 569.0,159.6 572.0,160.6 573.4,161.1 575.0,160.2 578.0,158.6 580.0,157.5 581.0,157.5 584.0,157.3 587.0,157.2 590.0,157.0 592.0,157.0 593.0,155.8 593.7,154.9 596.0,155.0 599.0,155.0 602.0,155.1 605.0,155.2 607.0,155.3 608.0,156.2 610.0,158.2 611.0,157.9 614.0,157.3 617.0,156.7 620.0,156.0 622.4,155.6 623.0,155.8 626.0,156.5 629.0,157.3 632.0,157.1 635.0,156.9 638.0,156.8 640.0,156.7 641.0,156.6 644.0,156.3 647.0,156.0 650.0,155.7 653.0,155.4 653.5,155.4 656.0,155.6 659.0,155.9 660.0,155.9 662.0,156.0 665.0,156.0 668.0,156.0 671.0,156.0 674.0,156.0 677.0,156.1 680.0,156.1 680.5,156.1 683.0,158.6 686.0,157.1 686.5,156.8 689.0,156.9 692.0,157.0 695.0,157.1 698.0,157.2 699.0,157.3 701.0,159.4 701.7,160.1 703.3,152.0 704.0,152.2 707.0,152.6 710.0,153.1 713.0,153.5 716.0,154.0 717.7,154.2 719.0,155.0 720.0,155.6 722.0,153.7 722.8,152.9 725.0,153.1 728.0,153.4 731.0,153.7 734.0,154.0 736.0,154.2 737.0,154.3 740.0,154.6 743.0,155.0 746.0,155.3 749.0,155.6 751.5,155.9 752.0,156.1 755.0,157.6 755.7,157.9 758.0,156.2 759.0,155.4 761.0,155.0 764.0,154.3 767.0,153.7 768.4,153.4 770.0,154.1 773.0,155.3 774.3,155.9 776.0,154.2 776.8,153.4 779.0,153.0 782.0,152.4 785.0,151.8 788.0,151.3 788.6,151.2 791.0,159.4 791.2,160.1 793.7,157.6 794.0,157.5 797.0,157.5 800.0,157.4 803.0,157.3 806.0,157.2 809.0,157.1 811.5,159.7 812.0,159.5 814.0,158.3 815.0,158.3 818.0,158.2 821.0,158.1 824.0,158.0 827.0,157.9 829.2,157.8 830.0,157.7 833.0,157.4 836.0,157.1 839.0,156.7 840.0,156.6 842.0,157.4 845.0,158.5 846.8,159.2 848.0,159.3 851.0,159.4 854.0,159.5 857.0,159.7 860.0,159.8 863.0,160.0 863.6,160.0 866.0,161.2 869.0,159.8 869.6,159.5 872.0,159.7 875.0,159.9 878.0,160.2 881.0,160.4 882.0,160.5 884.0,161.9 884.8,162.5 887.0,161.1 888.0,160.5 890.0,160.7 893.0,161.1 896.0,161.4 899.0,161.8 901.7,162.1 902.0,162.0 905.0,160.4 908.0,160.3 911.0,160.1 914.0,160.0 914.3,159.9 917.0,160.8 920.0,161.8 921.0,162.1 923.0,161.8 926.0,161.4 929.0,160.9 929.5,160.8 932.0,161.7 935.0,162.8 938.0,163.9 939.7,164.5 941.0,163.6 944.0,161.6 946.4,159.9 947.0,159.9 950.0,159.9 953.0,159.9 954.9,159.9 956.0,160.6 958.2,162.1 959.0,161.7 962.0,160.2 965.0,158.7 968.0,158.7 971.0,158.7 973.4,158.7 974.0,159.2 976.0,160.8 977.0,160.2 980.0,158.3 980.2,158.2 983.0,158.0 986.0,157.9 989.0,157.8 992.0,157.7 994.6,159.1 995.0,159.0 998.0,158.5 1000.0,158.2 1001.0,158.1 1004.0,158.1 1007.0,158.1 1010.0,158.1 1013.0,158.0 1015.2,158.0 1016.0,157.5 1019.0,155.7 1022.0,156.0 1025.0,156.3 1028.0,156.6 1030.4,156.9 1031.0,156.9 1034.0,156.9 1037.0,157.0 1040.0,157.0 1043.0,157.1 1046.0,157.1 1046.9,157.2 1049.0,158.9 1049.4,159.2 1052.0,155.5 1055.0,154.8 1057.0,154.3 1058.0,154.4 1061.0,154.8 1064.0,155.2 1064.6,155.2 1067.0,156.1 1067.8,156.4 1070.0,155.8 1073.0,155.0 1074.7,154.5 1076.0,154.6 1079.0,154.9 1082.0,155.1 1085.0,155.4 1087.4,155.5 1088.0,152.9 1088.7,149.8 1091.0,148.6 1093.0,147.6 1094.0,147.7 1097.0,147.8 1100.0,148.0 1103.0,148.1 1103.9,148.2 1106.0,149.0 1107.0,149.4 1109.0,148.9 1111.5,148.3 1112.0,148.5 1115.0,149.7 1116.6,150.3 1118.0,150.8 1121.0,151.8 1122.3,152.3 1124.0,151.3 1126.7,149.8 1127.0,149.5 1129.9,146.9 1130.0,146.9 1133.0,146.9 1136.0,146.9 1138.7,146.9 1139.0,147.6 1140.0,150.0 1142.0,150.0 1145.0,150.1 1146.0,150.1 1146.0,141.6 1145.0,141.6 1142.0,141.6 1140.0,141.6 1139.0,139.2 1138.7,138.5 1136.0,138.6 1133.0,138.6 1130.0,138.7 1129.9,138.7 1127.0,141.3 1126.7,141.6 1124.0,143.2 1122.3,144.2 1121.0,143.8 1118.0,142.8 1116.6,142.3 1115.0,141.7 1112.0,140.6 1111.5,140.4 1109.0,141.1 1107.0,141.6 1106.0,141.2 1103.9,140.4 1103.0,140.4 1100.0,140.2 1097.0,140.1 1094.0,140.0 1093.0,140.0 1091.0,141.1 1088.7,142.3 1088.0,145.3 1087.4,148.0 1085.0,147.9 1082.0,147.8 1079.0,147.7 1076.0,147.6 1074.7,147.6 1073.0,148.1 1070.0,149.1 1067.8,149.9 1067.0,149.6 1064.6,148.9 1064.0,148.8 1061.0,148.6 1058.0,148.4 1057.0,148.4 1055.0,149.0 1052.0,149.9 1049.4,153.7 1049.0,153.4 1046.9,151.8 1046.0,151.8 1043.0,151.9 1040.0,152.0 1037.0,152.1 1034.0,152.2 1031.0,152.3 1030.4,152.4 1028.0,152.2 1025.0,152.1 1022.0,151.9 1019.0,151.8 1016.0,153.7 1015.2,154.3 1013.0,154.4 1010.0,154.6 1007.0,154.7 1004.0,154.9 1001.0,155.1 1000.0,155.2 998.0,155.5 995.0,156.0 994.6,156.0 992.0,154.6 989.0,154.8 986.0,154.9 983.0,155.0 980.2,155.1 980.0,155.3 977.0,157.1 976.0,157.7 974.0,156.1 973.4,155.6 971.0,155.6 968.0,155.6 965.0,155.6 962.0,157.1 959.0,158.6 958.2,159.0 956.0,157.6 954.9,156.8 953.0,156.8 950.0,156.8 947.0,156.8 946.4,156.8 944.0,158.5 941.0,160.5 939.7,161.4 938.0,160.8 935.0,159.7 932.0,158.6 929.5,157.7 929.0,157.8 926.0,158.3 923.0,158.7 921.0,159.0 920.0,158.7 917.0,157.7 914.3,156.8 914.0,156.8 911.0,157.0 908.0,157.2 905.0,157.3 902.0,158.9 901.7,159.0 899.0,158.7 896.0,158.3 893.0,157.9 890.0,157.6 888.0,157.3 887.0,157.9 884.8,159.3 884.0,158.7 882.0,157.3 881.0,157.2 878.0,157.0 875.0,156.7 872.0,156.5 869.6,156.3 869.0,156.6 866.0,158.0 863.6,156.8 863.0,156.8 860.0,156.6 857.0,156.5 854.0,156.3 851.0,156.2 848.0,156.1 846.8,156.0 845.0,155.3 842.0,154.2 840.0,153.4 839.0,153.5 836.0,153.8 833.0,154.2 830.0,154.5 829.2,154.6 827.0,154.7 824.0,154.8 821.0,154.9 818.0,155.0 815.0,155.1 814.0,155.1 812.0,156.2 811.5,156.5 809.0,153.9 806.0,154.0 803.0,154.0 800.0,154.1 797.0,154.2 794.0,154.3 793.7,154.3 791.2,156.8 791.0,156.1 788.6,147.9 788.0,148.0 785.0,148.6 782.0,149.1 779.0,149.7 776.8,150.1 776.0,150.9 774.3,152.6 773.0,152.0 770.0,150.8 768.4,150.1 767.0,150.4 764.0,151.0 761.0,151.6 759.0,152.1 758.0,152.8 755.7,154.6 755.0,154.2 752.0,152.8 751.5,152.6 749.0,152.3 746.0,152.0 743.0,151.6 740.0,151.3 737.0,151.0 736.0,150.9 734.0,150.7 731.0,150.4 728.0,150.1 725.0,149.8 722.8,149.6 722.0,150.3 720.0,152.3 719.0,151.6 717.7,150.9 716.0,150.6 713.0,150.1 710.0,149.7 707.0,149.2 704.0,148.8 703.3,148.7 701.7,156.8 701.0,156.0 699.0,153.9 698.0,153.8 695.0,153.7 692.0,153.6 689.0,153.4 686.5,153.3 686.0,153.6 683.0,155.0 680.5,152.5 680.0,152.5 677.0,152.5 674.0,152.4 671.0,152.4 668.0,152.4 665.0,152.3 662.0,152.3 660.0,152.2 659.0,152.1 656.0,151.9 653.5,151.6 653.0,151.7 650.0,151.9 647.0,152.2 644.0,152.5 641.0,152.7 640.0,152.8 638.0,152.9 635.0,153.1 632.0,153.2 629.0,153.3 626.0,152.6 623.0,151.8 622.4,151.6 620.0,152.0 617.0,152.6 614.0,153.1 611.0,153.6 610.0,153.8 608.0,151.8 607.0,150.8 605.0,150.7 602.0,150.5 599.0,150.3 596.0,150.2 593.7,150.0 593.0,150.9 592.0,152.1 590.0,152.0 587.0,151.9 584.0,151.8 581.0,151.7 580.0,151.6 578.0,152.5 575.0,153.9 573.4,154.6 572.0,154.0 569.0,152.8 568.4,152.5 566.0,151.1 565.0,150.5 563.0,150.5 560.0,150.5 557.0,150.5 555.0,150.5 554.0,149.7 551.5,147.8 551.0,147.8 548.0,147.8 545.0,148.1 543.3,148.3 542.3,150.0 542.0,150.0 539.0,150.4 538.4,150.4 537.4,157.0 536.0,157.2 534.6,157.3 533.6,160.6 533.0,160.6 530.0,160.6 529.6,160.6 528.6,165.0 527.0,165.0 524.7,165.0 524.0,167.3 523.7,168.3 521.0,168.3 520.3,168.3 519.3,175.9 518.0,175.9 516.0,175.9 515.0,178.1 512.0,178.1 511.6,178.1 510.6,183.0 509.0,183.0 506.7,183.0 506.0,186.1 505.7,187.4 503.0,187.4 501.7,187.4 500.7,192.3 500.0,192.3 497.4,192.3 497.0,193.4 496.4,195.1 494.0,195.1 493.0,195.1 492.0,199.4 491.0,199.4 488.1,199.4 488.0,199.9 487.1,204.4 485.0,204.4 483.1,204.4 482.1,208.7 482.0,208.7 479.0,208.7 478.8,208.7 477.8,213.7 476.0,213.7 474.4,213.7 473.4,218.6 473.0,218.6 470.0,218.6 469.0,223.9 467.0,223.7 465.0,223.5 464.0,228.4 462.0,228.1 461.0,233.0 458.0,232.7 457.0,232.6 456.0,236.5 455.0,236.5 452.0,236.5 449.0,236.5 447.0,236.5 446.0,236.9 444.0,237.7 443.0,237.3 440.0,236.0 437.0,236.1 434.0,236.1 432.0,236.2 431.0,236.6 428.0,238.0 427.0,238.4 425.0,236.2 422.0,236.4 419.0,236.6 416.0,236.8 413.0,236.9 412.0,237.0 410.0,238.1 408.0,239.2 407.0,238.5 405.0,237.2 404.0,237.4 401.0,238.1 398.0,238.8 395.0,239.5 392.0,240.8 390.0,241.7 389.0,241.2 386.0,239.7 385.0,239.2 383.0,239.2 380.0,239.3 377.0,239.4 374.0,239.5 373.0,239.5 371.0,238.8 370.0,238.4 368.0,238.2 365.0,238.0 362.0,237.8 359.0,237.6 358.0,237.5 356.0,239.8 355.0,240.9 353.0,239.6 352.0,238.9 350.0,238.7 347.0,238.4 344.0,238.2 341.0,237.9 338.0,238.9 336.0,239.5 335.0,238.7 333.0,237.2 332.0,237.2 329.0,237.0 326.0,236.9 323.0,236.7 322.0,236.7 320.0,237.6 318.0,238.4 317.0,237.7 315.0,236.2 314.0,236.2 311.0,236.2 308.0,236.2 305.0,236.2 302.0,236.2 299.0,236.2 297.0,236.2 296.0,235.9 293.0,235.1 290.0,234.4 289.0,234.1 287.0,234.5 284.0,235.0 281.0,235.6 280.0,235.8 278.0,235.9 275.0,235.9 272.0,236.0 269.0,236.1 266.0,236.2 265.0,236.2 263.0,237.1 262.0,237.5 260.0,236.7 257.0,235.5 254.0,235.6 251.0,235.8 250.0,235.8 248.0,236.5 245.0,237.5 242.0,236.5 240.0,235.8 239.0,235.9 236.0,236.2 233.0,236.5 231.0,236.7 230.0,237.2 227.0,238.6 225.8,239.2 224.0,236.7 221.0,236.8 218.0,237.0 215.0,237.1 214.0,237.2 212.0,238.4 209.0,240.2 206.4,241.7 206.0,241.6 203.0,240.4 200.0,239.3 198.8,238.9 197.0,238.9 194.0,238.9 192.0,238.9 191.0,239.1 188.6,239.5 188.0,239.2 185.0,237.5 182.0,237.5 179.0,237.5 176.0,237.5 173.4,237.5 173.0,237.9 170.0,240.5 167.0,239.2 165.0,238.4 164.0,238.4 161.0,238.4 158.0,238.4 156.5,238.4 155.0,238.8 152.3,239.5 152.0,239.3 149.0,237.4 148.0,236.7 146.0,236.7 143.0,236.7 140.0,236.7 138.0,236.7 137.0,237.2 134.6,238.4 134.0,238.1 131.0,236.7 128.0,236.7 125.0,236.7 122.0,236.7 119.0,236.7 117.7,236.7 116.0,236.3 113.0,235.6 112.6,235.5 110.0,235.0 107.0,234.3 105.9,234.1 104.0,234.8 101.0,235.8 98.3,236.7 98.0,236.6 95.7,236.2 95.0,236.2 92.0,236.2 89.0,236.2 86.0,236.2 83.0,236.2 82.0,236.2 80.0,237.0 78.9,237.5 77.0,236.9 74.0,235.9 73.8,235.8 71.0,235.8 68.0,235.8 65.0,235.8 63.6,235.8 62.0,237.1 60.3,238.4 59.0,237.4 58.0,236.7 56.0,236.7 53.0,236.7 50.0,236.7 47.0,236.7" fill="#dd4e41" fill-opacity="0.3"/><polygon points="47.0,236.7 50.0,236.7 53.0,236.7 56.0,236.7 58.0,236.7 59.0,237.4 60.3,238.4 62.0,237.1 63.6,235.8 65.0,235.8 68.0,235.8 71.0,235.8 73.8,235.8 74.0,235.9 77.0,236.9 78.9,237.5 80.0,237.0 82.0,236.2 83.0,236.2 86.0,236.2 89.0,236.2 92.0,236.2 95.0,236.2 95.7,236.2 98.0,236.6 98.3,236.7 101.0,235.8 104.0,234.8 105.9,234.1 107.0,234.3 110.0,235.0 112.6,235.5 113.0,235.6 116.0,236.3 117.7,236.7 119.0,236.7 122.0,236.7 125.0,236.7 128.0,236.7 131.0,236.7 134.0,238.1 134.6,238.4 137.0,237.2 138.0,236.7 140.0,236.7 143.0,236.7 146.0,236.7 148.0,236.7 149.0,237.4 152.0,239.3 152.3,239.5 155.0,238.8 156.5,238.4 158.0,238.4 161.0,238.4 164.0,238.4 165.0,238.4 167.0,239.2 170.0,240.5 173.0,237.9 173.4,237.5 176.0,237.5 179.0,237.5 182.0,237.5 185.0,237.5 188.0,239.2 188.6,239.5 191.0,239.1 192.0,238.9 194.0,238.9 197.0,238.9 198.8,238.9 200.0,239.3 203.0,240.4 206.0,241.6 206.4,241.7 209.0,240.2 212.0,238.4 214.0,237.2 215.0,237.1 218.0,237.0 221.0,236.8 224.0,236.7 225.8,239.2 227.0,238.6 230.0,237.2 231.0,236.7 233.0,236.5 236.0,236.2 239.0,235.9 240.0,235.8 242.0,236.5 245.0,237.5 248.0,236.5 250.0,235.8 251.0,235.8 254.0,235.6 257.0,235.5 260.0,236.7 262.0,237.5 263.0,237.1 265.0,236.2 266.0,236.2 269.0,236.1 272.0,236.0 275.0,235.9 278.0,235.9 280.0,235.8 281.0,235.6 284.0,235.0 287.0,234.5 289.0,234.1 290.0,234.4 293.0,235.1 296.0,235.9 297.0,236.2 299.0,236.2 302.0,236.2 305.0,236.2 308.0,236.2 311.0,236.2 314.0,236.2 315.0,236.2 317.0,237.7 318.0,238.4 320.0,237.6 322.0,236.7 323.0,236.7 326.0,236.9 329.0,237.0 332.0,237.2 333.0,237.2 335.0,238.7 336.0,239.5 338.0,238.9 341.0,237.9 344.0,238.2 347.0,238.4 350.0,238.7 352.0,238.9 353.0,239.6 355.0,240.9 356.0,239.8 358.0,237.5 359.0,237.6 362.0,237.8 365.0,238.0 368.0,238.2 370.0,238.4 371.0,238.8 373.0,239.5 374.0,239.5 377.0,239.4 380.0,239.3 383.0,239.2 385.0,239.2 386.0,239.7 389.0,241.2 390.0,241.7 392.0,240.8 395.0,239.5 398.0,238.8 401.0,238.1 404.0,237.4 405.0,237.2 407.0,238.5 408.0,239.2 410.0,238.1 412.0,237.0 413.0,236.9 416.0,236.8 419.0,236.6 422.0,236.4 425.0,236.2 427.0,238.4 428.0,238.0 431.0,236.6 432.0,236.2 434.0,236.1 437.0,236.1 440.0,236.0 443.0,237.3 444.0,237.7 446.0,236.9 447.0,236.5 449.0,236.5 452.0,236.5 455.0,236.5 456.0,236.5 457.0,232.6 458.0,232.7 461.0,233.0 462.0,228.1 464.0,228.4 465.0,223.5 467.0,223.7 469.0,223.9 470.0,218.6 473.0,218.6 473.4,218.6 474.4,213.7 476.0,213.7 477.8,213.7 478.8,208.7 479.0,208.7 482.0,208.7 482.1,208.7 483.1,204.4 485.0,204.4 487.1,204.4 488.0,199.9 488.1,199.4 491.0,199.4 492.0,199.4 493.0,195.1 494.0,195.1 496.4,195.1 497.0,193.4 497.4,192.3 500.0,192.3 500.7,192.3 501.7,187.4 503.0,187.4 505.7,187.4 506.0,186.1 506.7,183.0 509.0,183.0 510.6,183.0 511.6,178.1 512.0,178.1 515.0,178.1 516.0,175.9 518.0,175.9 519.3,175.9 520.3,168.3 521.0,168.3 523.7,168.3 524.0,167.3 524.7,165.0 527.0,165.0 528.6,165.0 529.6,160.6 530.0,160.6 533.0,160.6 533.6,160.6 534.6,157.3 536.0,157.2 537.4,157.0 538.4,150.4 539.0,150.4 542.0,150.0 542.3,150.0 543.3,148.3 545.0,148.1 548.0,147.8 551.0,147.8 551.5,147.8 554.0,149.7 555.0,150.5 557.0,150.5 560.0,150.5 563.0,150.5 565.0,150.5 566.0,151.1 568.4,152.5 569.0,152.8 572.0,154.0 573.4,154.6 575.0,153.9 578.0,152.5 580.0,151.6 581.0,151.7 584.0,151.8 587.0,151.9 590.0,152.0 592.0,152.1 593.0,150.9 593.7,150.0 596.0,150.2 599.0,150.3 602.0,150.5 605.0,150.7 607.0,150.8 608.0,151.8 610.0,153.8 611.0,153.6 614.0,153.1 617.0,152.6 620.0,152.0 622.4,151.6 623.0,151.8 626.0,152.6 629.0,153.3 632.0,153.2 635.0,153.1 638.0,152.9 640.0,152.8 641.0,152.7 644.0,152.5 647.0,152.2 650.0,151.9 653.0,151.7 653.5,151.6 656.0,151.9 659.0,152.1 660.0,152.2 662.0,152.3 665.0,152.3 668.0,152.4 671.0,152.4 674.0,152.4 677.0,152.5 680.0,152.5 680.5,152.5 683.0,155.0 686.0,153.6 686.5,153.3 689.0,153.4 692.0,153.6 695.0,153.7 698.0,153.8 699.0,153.9 701.0,156.0 701.7,156.8 703.3,148.7 704.0,148.8 707.0,149.2 710.0,149.7 713.0,150.1 716.0,150.6 717.7,150.9 719.0,151.6 720.0,152.3 722.0,150.3 722.8,149.6 725.0,149.8 728.0,150.1 731.0,150.4 734.0,150.7 736.0,150.9 737.0,151.0 740.0,151.3 743.0,151.6 746.0,152.0 749.0,152.3 751.5,152.6 752.0,152.8 755.0,154.2 755.7,154.6 758.0,152.8 759.0,152.1 761.0,151.6 764.0,151.0 767.0,150.4 768.4,150.1 770.0,150.8 773.0,152.0 774.3,152.6 776.0,150.9 776.8,150.1 779.0,149.7 782.0,149.1 785.0,148.6 788.0,148.0 788.6,147.9 791.0,156.1 791.2,156.8 793.7,154.3 794.0,154.3 797.0,154.2 800.0,154.1 803.0,154.0 806.0,154.0 809.0,153.9 811.5,156.5 812.0,156.2 814.0,155.1 815.0,155.1 818.0,155.0 821.0,154.9 824.0,154.8 827.0,154.7 829.2,154.6 830.0,154.5 833.0,154.2 836.0,153.8 839.0,153.5 840.0,153.4 842.0,154.2 845.0,155.3 846.8,156.0 848.0,156.1 851.0,156.2 854.0,156.3 857.0,156.5 860.0,156.6 863.0,156.8 863.6,156.8 866.0,158.0 869.0,156.6 869.6,156.3 872.0,156.5 875.0,156.7 878.0,157.0 881.0,157.2 882.0,157.3 884.0,158.7 884.8,159.3 887.0,157.9 888.0,157.3 890.0,157.6 893.0,157.9 896.0,158.3 899.0,158.7 901.7,159.0 902.0,158.9 905.0,157.3 908.0,157.2 911.0,157.0 914.0,156.8 914.3,156.8 917.0,157.7 920.0,158.7 921.0,159.0 923.0,158.7 926.0,158.3 929.0,157.8 929.5,157.7 932.0,158.6 935.0,159.7 938.0,160.8 939.7,161.4 941.0,160.5 944.0,158.5 946.4,156.8 947.0,156.8 950.0,156.8 953.0,156.8 954.9,156.8 956.0,157.6 958.2,159.0 959.0,158.6 962.0,157.1 965.0,155.6 968.0,155.6 971.0,155.6 973.4,155.6 974.0,156.1 976.0,157.7 977.0,157.1 980.0,155.3 980.2,155.1 983.0,155.0 986.0,154.9 989.0,154.8 992.0,154.6 994.6,156.0 995.0,156.0 998.0,155.5 1000.0,155.2 1001.0,155.1 1004.0,154.9 1007.0,154.7 1010.0,154.6 1013.0,154.4 1015.2,154.3 1016.0,153.7 1019.0,151.8 1022.0,151.9 1025.0,152.1 1028.0,152.2 1030.4,152.4 1031.0,152.3 1034.0,152.2 1037.0,152.1 1040.0,152.0 1043.0,151.9 1046.0,151.8 1046.9,151.8 1049.0,153.4 1049.4,153.7 1052.0,149.9 1055.0,149.0 1057.0,148.4 1058.0,148.4 1061.0,148.6 1064.0,148.8 1064.6,148.9 1067.0,149.6 1067.8,149.9 1070.0,149.1 1073.0,148.1 1074.7,147.6 1076.0,147.6 1079.0,147.7 1082.0,147.8 1085.0,147.9 1087.4,148.0 1088.0,145.3 1088.7,142.3 1091.0,141.1 1093.0,140.0 1094.0,140.0 1097.0,140.1 1100.0,140.2 1103.0,140.4 1103.9,140.4 1106.0,141.2 1107.0,141.6 1109.0,141.1 1111.5,140.4 1112.0,140.6 1115.0,141.7 1116.6,142.3 1118.0,142.8 1121.0,143.8 1122.3,144.2 1124.0,143.2 1126.7,141.6 1127.0,141.3 1129.9,138.7 1130.0,138.7 1133.0,138.6 1136.0,138.6 1138.7,138.5 1139.0,139.2 1140.0,141.6 1142.0,141.6 1145.0,141.6 1146.0,141.6 1146.0,130.8 1145.0,130.8 1142.0,130.8 1140.0,130.8 1139.0,128.4 1138.7,127.7 1136.0,127.8 1133.0,127.8 1130.0,127.9 1129.9,127.9 1127.0,130.5 1126.7,130.8 1124.0,132.4 1122.3,133.4 1121.0,133.0 1118.0,132.0 1116.6,131.5 1115.0,130.9 1112.0,129.8 1111.5,129.6 1109.0,130.3 1107.0,130.8 1106.0,130.4 1103.9,129.6 1103.0,129.6 1100.0,129.5 1097.0,129.3 1094.0,129.2 1093.0,129.2 1091.0,130.3 1088.7,131.5 1088.0,134.6 1087.4,137.2 1085.0,137.1 1082.0,137.0 1079.0,136.9 1076.0,136.8 1074.7,136.8 1073.0,137.4 1070.0,138.4 1067.8,139.1 1067.0,138.9 1064.6,138.1 1064.0,138.1 1061.0,137.9 1058.0,137.7 1057.0,137.6 1055.0,138.2 1052.0,139.1 1049.4,142.9 1049.0,142.6 1046.9,141.0 1046.0,141.0 1043.0,141.1 1040.0,141.3 1037.0,141.4 1034.0,141.5 1031.0,141.6 1030.4,141.6 1028.0,141.5 1025.0,141.3 1022.0,141.2 1019.0,141.0 1016.0,143.0 1015.2,143.5 1013.0,143.6 1010.0,143.8 1007.0,144.0 1004.0,144.2 1001.0,144.3 1000.0,144.4 998.0,144.7 995.0,145.2 994.6,145.3 992.0,143.9 989.0,144.0 986.0,144.2 983.0,144.3 980.2,144.4 980.0,144.5 977.0,146.4 976.0,147.0 974.0,145.4 973.4,144.9 971.0,144.9 968.0,144.9 965.0,144.9 962.0,146.4 959.0,147.9 958.2,148.3 956.0,146.8 954.9,146.1 953.0,146.1 950.0,146.1 947.0,146.1 946.4,146.1 944.0,147.7 941.0,149.8 939.7,150.7 938.0,150.1 935.0,149.0 932.0,147.9 929.5,147.0 929.0,147.1 926.0,147.5 923.0,148.0 921.0,148.3 920.0,148.0 917.0,147.0 914.3,146.1 914.0,146.1 911.0,146.3 908.0,146.4 905.0,146.6 902.0,148.1 901.7,148.3 899.0,148.0 896.0,147.6 893.0,147.2 890.0,146.8 888.0,146.6 887.0,147.2 884.8,148.6 884.0,148.0 882.0,146.6 881.0,146.5 878.0,146.3 875.0,146.0 872.0,145.8 869.6,145.6 869.0,145.9 866.0,147.3 863.6,146.1 863.0,146.1 860.0,145.9 857.0,145.8 854.0,145.6 851.0,145.5 848.0,145.4 846.8,145.3 845.0,144.6 842.0,143.5 840.0,142.7 839.0,142.8 836.0,143.1 833.0,143.5 830.0,143.8 829.2,143.9 827.0,144.0 824.0,144.1 821.0,144.2 818.0,144.3 815.0,144.4 814.0,144.4 812.0,145.5 811.5,145.8 809.0,143.2 806.0,143.3 803.0,143.4 800.0,143.4 797.0,143.5 794.0,143.6 793.7,143.6 791.2,146.1 791.0,145.4 788.6,137.2 788.0,137.3 785.0,137.9 782.0,138.4 779.0,139.0 776.8,139.4 776.0,140.2 774.3,141.9 773.0,141.3 770.0,140.1 768.4,139.4 767.0,139.7 764.0,140.3 761.0,141.0 759.0,141.4 758.0,142.2 755.7,143.9 755.0,143.6 752.0,142.1 751.5,141.9 749.0,141.6 746.0,141.3 743.0,141.0 740.0,140.6 737.0,140.3 736.0,140.2 734.0,140.0 731.0,139.7 728.0,139.4 725.0,139.1 722.8,138.9 722.0,139.7 720.0,141.6 719.0,141.0 717.7,140.2 716.0,139.9 713.0,139.5 710.0,139.0 707.0,138.6 704.0,138.1 703.3,138.0 701.7,146.1 701.0,145.3 699.0,143.2 698.0,143.2 695.0,143.0 692.0,142.9 689.0,142.8 686.5,142.7 686.0,142.9 683.0,144.4 680.5,141.9 680.0,141.9 677.0,141.8 674.0,141.8 671.0,141.8 668.0,141.7 665.0,141.7 662.0,141.6 660.0,141.6 659.0,141.5 656.0,141.2 653.5,141.0 653.0,141.0 650.0,141.3 647.0,141.6 644.0,141.8 641.0,142.1 640.0,142.2 638.0,142.3 635.0,142.4 632.0,142.6 629.0,142.7 626.0,141.9 623.0,141.2 622.4,141.0 620.0,141.4 617.0,142.0 614.0,142.5 611.0,143.0 610.0,143.2 608.0,141.2 607.0,140.2 605.0,140.1 602.0,139.9 599.0,139.7 596.0,139.5 593.7,139.4 593.0,140.3 592.0,141.5 590.0,141.4 587.0,141.3 584.0,141.2 581.0,141.0 580.0,141.0 578.0,141.9 575.0,143.3 573.4,144.0 572.0,143.4 569.0,142.2 568.4,141.9 566.0,140.5 565.0,139.9 563.0,139.9 560.0,139.9 557.0,139.9 555.0,139.9 554.0,139.1 551.5,137.2 551.0,137.2 548.0,137.2 545.0,137.2 543.3,137.2 542.3,138.8 542.0,138.8 539.0,138.8 538.4,138.8 537.4,145.3 536.0,145.3 534.6,145.3 533.6,148.6 533.0,148.6 530.0,148.6 529.6,148.6 528.6,153.0 527.0,153.0 524.7,153.0 524.0,155.3 523.7,156.3 521.0,156.3 520.3,156.3 519.3,163.9 518.0,163.9 516.0,163.9 515.0,166.1 512.0,166.1 511.6,166.1 510.6,171.0 509.0,171.0 506.7,171.0 506.0,174.1 505.7,175.4 503.0,175.4 501.7,175.4 500.7,180.3 500.0,180.3 497.4,180.3 497.0,181.4 496.4,183.1 494.0,183.1 493.0,183.1 492.0,187.4 491.0,187.4 488.1,187.4 488.0,187.9 487.1,192.4 485.0,192.4 483.1,192.4 482.1,196.7 482.0,196.7 479.0,196.7 478.8,196.7 477.8,201.7 476.0,201.7 474.4,201.7 473.4,206.6 473.0,206.6 470.0,206.6 469.0,212.0 467.0,212.0 465.0,212.0 464.0,217.0 462.0,217.0 461.0,222.0 458.0,222.0 457.0,222.0 456.0,226.0 455.0,226.0 452.0,226.0 449.0,226.0 447.0,226.0 446.0,226.4 444.0,227.2 443.0,226.8 440.0,225.5 437.0,225.6 434.0,225.6 432.0,225.7 431.0,226.1 428.0,227.5 427.0,227.9 425.0,225.7 422.0,225.9 419.0,226.1 416.0,226.3 413.0,226.4 412.0,226.5 410.0,227.6 408.0,228.7 407.0,228.0 405.0,226.7 404.0,226.9 401.0,227.6 398.0,228.3 395.0,229.0 392.0,230.3 390.0,231.2 389.0,230.7 386.0,229.2 385.0,228.7 383.0,228.8 380.0,228.8 377.0,228.9 374.0,229.0 373.0,229.0 371.0,228.3 370.0,227.9 368.0,227.8 365.0,227.5 362.0,227.3 359.0,227.1 358.0,227.0 356.0,229.3 355.0,230.4 353.0,229.1 352.0,228.4 350.0,228.2 347.0,227.9 344.0,227.7 341.0,227.4 338.0,228.4 336.0,229.0 335.0,228.2 333.0,226.7 332.0,226.7 329.0,226.5 326.0,226.4 323.0,226.2 322.0,226.2 320.0,227.1 318.0,227.9 317.0,227.2 315.0,225.7 314.0,225.7 311.0,225.7 308.0,225.7 305.0,225.7 302.0,225.7 299.0,225.7 297.0,225.7 296.0,225.4 293.0,224.6 290.0,223.9 289.0,223.6 287.0,224.0 284.0,224.5 281.0,225.1 280.0,225.3 278.0,225.4 275.0,225.4 272.0,225.5 269.0,225.6 266.0,225.7 265.0,225.7 263.0,226.6 262.0,227.0 260.0,226.2 257.0,225.0 254.0,225.1 251.0,225.3 250.0,225.3 248.0,226.0 245.0,227.0 242.0,226.0 240.0,225.3 239.0,225.4 236.0,225.7 233.0,226.0 231.0,226.2 230.0,226.7 227.0,228.1 225.8,228.7 224.0,226.2 221.0,226.3 218.0,226.5 215.0,226.6 214.0,226.7 212.0,227.9 209.0,229.7 206.4,231.2 206.0,231.1 203.0,229.9 200.0,228.8 198.8,228.4 197.0,228.4 194.0,228.4 192.0,228.4 191.0,228.6 188.6,229.0 188.0,228.7 185.0,227.0 182.0,227.0 179.0,227.0 176.0,227.0 173.4,227.0 173.0,227.4 170.0,230.0 167.0,228.7 165.0,227.9 164.0,227.9 161.0,227.9 158.0,227.9 156.5,227.9 155.0,228.3 152.3,229.0 152.0,228.8 149.0,226.9 148.0,226.2 146.0,226.2 143.0,226.2 140.0,226.2 138.0,226.2 137.0,226.7 134.6,227.9 134.0,227.6 131.0,226.2 128.0,226.2 125.0,226.2 122.0,226.2 119.0,226.2 117.7,226.2 116.0,225.8 113.0,225.1 112.6,225.0 110.0,224.5 107.0,223.8 105.9,223.6 104.0,224.2 101.0,225.3 98.3,226.2 98.0,226.1 95.7,225.7 95.0,225.7 92.0,225.7 89.0,225.7 86.0,225.7 83.0,225.7 82.0,225.7 80.0,226.5 78.9,227.0 77.0,226.4 74.0,225.4 73.8,225.3 71.0,225.3 68.0,225.3 65.0,225.3 63.6,225.3 62.0,226.6 60.3,227.9 59.0,226.9 58.0,226.2 56.0,226.2 53.0,226.2 50.0,226.2 47.0,226.2" fill="#cca300" fill-opacity="0.3"/><polyline points="464.0,256.0 598.0,256.0" fill="none" stroke="#eab839" stroke-width="2"/><polyline points="1019.0,256.0 1146.0,256.0" fill="none" stroke="#eab839" stroke-width="2"/><polyline points="47.0,256.0 463.0,256.0 464.0,254.7 475.0,254.7 476.0,253.0 510.0,253.0 511.0,251.4 551.0,251.4 552.0,252.5 564.0,252.5 565.0,254.2 597.0,254.2 598.0,256.0 1019.0,256.0 1020.0,254.0 1050.0,254.0 1051.0,250.9 1074.0,250.9 1075.0,249.1 1087.0,249.1 1088.4,245.8 1093.4,244.7 1104.9,244.1 1107.0,246.3 1112.0,244.7 1137.9,244.7 1140.0,247.0 1146.0,248.4" fill="none" stroke="#6ed0e0" stroke-width="2" stroke-linejoin="round"/><polyline points="47.0,237.3 50.0,237.3 53.0,237.3 56.0,237.3 58.0,237.3 59.0,238.0 60.3,239.0 62.0,237.7 63.6,236.4 65.0,236.4 68.0,236.4 71.0,236.4 73.8,236.4 74.0,236.5 77.0,237.5 78.9,238.1 80.0,237.6 82.0,236.8 83.0,236.8 86.0,236.8 89.0,236.8 92.0,236.8 95.0,236.8 95.7,236.8 98.0,237.2 98.3,237.3 101.0,236.4 104.0,235.3 105.9,234.7 107.0,234.9 110.0,235.6 112.6,236.1 113.0,236.2 116.0,236.9 117.7,237.3 119.0,237.3 122.0,237.3 125.0,237.3 128.0,237.3 131.0,237.3 134.0,238.7 134.6,239.0 137.0,237.8 138.0,237.3 140.0,237.3 143.0,237.3 146.0,237.3 148.0,237.3 149.0,238.0 152.0,239.9 152.3,240.1 155.0,239.4 156.5,239.0 158.0,239.0 161.0,239.0 164.0,239.0 165.0,239.0 167.0,239.8 170.0,241.1 173.0,238.5 173.4,238.1 176.0,238.1 179.0,238.1 182.0,238.1 185.0,238.1 188.0,239.8 188.6,240.1 191.0,239.7 192.0,239.5 194.0,239.5 197.0,239.5 198.8,239.5 200.0,239.9 203.0,241.0 206.0,242.2 206.4,242.3 209.0,240.8 212.0,239.0 214.0,237.8 215.0,237.7 218.0,237.6 221.0,237.4 224.0,237.3 225.8,239.8 227.0,239.2 230.0,237.8 231.0,237.3 233.0,237.1 236.0,236.8 239.0,236.5 240.0,236.4 242.0,237.1 245.0,238.1 248.0,237.1 250.0,236.4 251.0,236.4 254.0,236.2 257.0,236.1 260.0,237.3 262.0,238.1 263.0,237.7 265.0,236.8 266.0,236.8 269.0,236.7 272.0,236.6 275.0,236.5 278.0,236.5 280.0,236.4 281.0,236.2 284.0,235.6 287.0,235.1 289.0,234.7 290.0,235.0 293.0,235.7 296.0,236.5 297.0,236.8 299.0,236.8 302.0,236.8 305.0,236.8 308.0,236.8 311.0,236.8 314.0,236.8 315.0,236.8 317.0,238.3 318.0,239.0 320.0,238.2 322.0,237.3 323.0,237.3 326.0,237.5 329.0,237.6 332.0,237.8 333.0,237.8 335.0,239.3 336.0,240.1 338.0,239.5 341.0,238.5 344.0,238.8 347.0,239.0 350.0,239.3 352.0,239.5 353.0,240.2 355.0,241.5 356.0,240.4 358.0,238.1 359.0,238.2 362.0,238.4 365.0,238.6 368.0,238.8 370.0,239.0 371.0,239.4 373.0,240.1 374.0,240.1 377.0,240.0 380.0,239.9 383.0,239.8 385.0,239.8 386.0,240.3 389.0,241.8 390.0,242.3 392.0,241.4 395.0,240.1 398.0,239.4 401.0,238.7 404.0,238.0 405.0,237.8 407.0,239.1 408.0,239.8 410.0,238.7 412.0,237.6 413.0,237.5 416.0,237.4 419.0,237.2 422.0,237.0 425.0,236.8 427.0,239.0 428.0,238.6 431.0,237.2 432.0,236.8 434.0,236.7 437.0,236.7 440.0,236.6 443.0,237.9 444.0,238.3 446.0,237.5 447.0,237.1 449.0,237.1 452.0,237.1 455.0,237.1 456.0,237.1 457.0,233.2 458.0,233.3 461.0,234.0 462.0,229.4 464.0,230.3 465.0,225.7 467.0,226.6 469.0,227.4 470.0,222.4 473.0,223.1 473.4,223.1 474.4,218.2 476.0,218.2 477.8,218.2 478.8,213.2 479.0,213.2 482.0,213.2 482.1,213.2 483.1,208.9 485.0,208.9 487.1,208.9 488.0,204.4 488.1,203.9 491.0,203.9 492.0,203.9 493.0,199.6 494.0,199.6 496.4,199.6 497.0,197.9 497.4,196.8 500.0,196.8 500.7,196.8 501.7,191.9 503.0,191.9 505.7,191.9 506.0,190.6 506.7,187.5 509.0,187.5 510.6,187.5 511.6,182.6 512.0,182.6 515.0,182.6 516.0,180.4 518.0,180.4 519.3,180.4 520.3,172.8 521.0,172.8 523.7,172.8 524.0,171.8 524.7,169.5 527.0,169.5 528.6,169.6 529.6,165.4 530.0,165.5 533.0,166.2 533.6,166.3 534.6,163.2 536.0,163.4 537.4,163.6 538.4,157.2 539.0,157.2 542.0,157.5 542.3,157.5 543.3,155.8 545.0,155.6 548.0,155.3 551.0,155.3 551.5,155.3 554.0,157.2 555.0,158.0 557.0,158.0 560.0,158.0 563.0,157.9 565.0,157.7 566.0,158.2 568.4,159.4 569.0,159.6 572.0,160.6 573.4,161.1 575.0,160.2 578.0,158.6 580.0,157.5 581.0,157.5 584.0,157.3 587.0,157.2 590.0,157.0 592.0,157.0 593.0,155.8 593.7,154.9 596.0,155.0 599.0,155.0 602.0,155.1 605.0,155.2 607.0,155.3 608.0,156.2 610.0,158.2 611.0,157.9 614.0,157.3 617.0,156.7 620.0,156.0 622.4,155.6 623.0,155.8 626.0,156.5 629.0,157.3 632.0,157.1 635.0,156.9 638.0,156.8 640.0,156.7 641.0,156.6 644.0,156.3 647.0,156.0 650.0,155.7 653.0,155.4 653.5,155.4 656.0,155.6 659.0,155.9 660.0,155.9 662.0,156.0 665.0,156.0 668.0,156.0 671.0,156.0 674.0,156.0 677.0,156.1 680.0,156.1 680.5,156.1 683.0,158.6 686.0,157.1 686.5,156.8 689.0,156.9 692.0,157.0 695.0,157.1 698.0,157.2 699.0,157.3 701.0,159.4 701.7,160.1 703.3,152.0 704.0,152.2 707.0,152.6 710.0,153.1 713.0,153.5 716.0,154.0 717.7,154.2 719.0,155.0 720.0,155.6 722.0,153.7 722.8,152.9 725.0,153.1 728.0,153.4 731.0,153.7 734.0,154.0 736.0,154.2 737.0,154.3 740.0,154.6 743.0,155.0 746.0,155.3 749.0,155.6 751.5,155.9 752.0,156.1 755.0,157.6 755.7,157.9 758.0,156.2 759.0,155.4 761.0,155.0 764.0,154.3 767.0,153.7 768.4,153.4 770.0,154.1 773.0,155.3 774.3,155.9 776.0,154.2 776.8,153.4 779.0,153.0 782.0,152.4 785.0,151.8 788.0,151.3 788.6,151.2 791.0,159.4 791.2,160.1 793.7,157.6 794.0,157.5 797.0,157.5 800.0,157.4 803.0,157.3 806.0,157.2 809.0,157.1 811.5,159.7 812.0,159.5 814.0,158.3 815.0,158.3 818.0,158.2 821.0,158.1 824.0,158.0 827.0,157.9 829.2,157.8 830.0,157.7 833.0,157.4 836.0,157.1 839.0,156.7 840.0,156.6 842.0,157.4 845.0,158.5 846.8,159.2 848.0,159.3 851.0,159.4 854.0,159.5 857.0,159.7 860.0,159.8 863.0,160.0 863.6,160.0 866.0,161.2 869.0,159.8 869.6,159.5 872.0,159.7 875.0,159.9 878.0,160.2 881.0,160.4 882.0,160.5 884.0,161.9 884.8,162.5 887.0,161.1 888.0,160.5 890.0,160.7 893.0,161.1 896.0,161.4 899.0,161.8 901.7,162.1 902.0,162.0 905.0,160.4 908.0,160.3 911.0,160.1 914.0,160.0 914.3,159.9 917.0,160.8 920.0,161.8 921.0,162.1 923.0,161.8 926.0,161.4 929.0,160.9 929.5,160.8 932.0,161.7 935.0,162.8 938.0,163.9 939.7,164.5 941.0,163.6 944.0,161.6 946.4,159.9 947.0,159.9 950.0,159.9 953.0,159.9 954.9,159.9 956.0,160.6 958.2,162.1 959.0,161.7 962.0,160.2 965.0,158.7 968.0,158.7 971.0,158.7 973.4,158.7 974.0,159.2 976.0,160.8 977.0,160.2 980.0,158.3 980.2,158.2 983.0,158.0 986.0,157.9 989.0,157.8 992.0,157.7 994.6,159.1 995.0,159.0 998.0,158.5 1000.0,158.2 1001.0,158.1 1004.0,158.1 1007.0,158.1 1010.0,158.1 1013.0,158.0 1015.2,158.0 1016.0,157.5 1019.0,155.7 1022.0,156.0 1025.0,156.3 1028.0,156.6 1030.4,156.9 1031.0,156.9 1034.0,156.9 1037.0,157.0 1040.0,157.0 1043.0,157.1 1046.0,157.1 1046.9,157.2 1049.0,158.9 1049.4,159.2 1052.0,155.5 1055.0,154.8 1057.0,154.3 1058.0,154.4 1061.0,154.8 1064.0,155.2 1064.6,155.2 1067.0,156.1 1067.8,156.4 1070.0,155.8 1073.0,155.0 1074.7,154.5 1076.0,154.6 1079.0,154.9 1082.0,155.1 1085.0,155.4 1087.4,155.5 1088.0,152.9 1088.7,149.8 1091.0,148.6 1093.0,147.6 1094.0,147.7 1097.0,147.8 1100.0,148.0 1103.0,148.1 1103.9,148.2 1106.0,149.0 1107.0,149.4 1109.0,148.9 1111.5,148.3 1112.0,148.5 1115.0,149.7 1116.6,150.3 1118.0,150.8 1121.0,151.8 1122.3,152.3 1124.0,151.3 1126.7,149.8 1127.0,149.5 1129.9,146.9 1130.0,146.9 1133.0,146.9 1136.0,146.9 1138.7,146.9 1139.0,147.6 1140.0,150.0 1142.0,150.0 1145.0,150.1 1146.0,150.1" fill="none" stroke="#ef843c" stroke-width="2" stroke-linejoin="round"/><polyline points="47.0,238.1 50.0,238.1 53.0,238.1 56.0,238.1 58.0,238.1 59.0,238.8 60.3,239.8 62.0,238.5 63.6,237.2 65.0,237.2 68.0,237.2 71.0,237.2 73.8,237.2 74.0,237.3 77.0,238.3 78.9,238.9 80.0,238.4 82.0,237.6 83.0,237.6 86.0,237.6 89.0,237.6 92.0,237.6 95.0,237.6 95.7,237.6 98.0,238.0 98.3,238.1 101.0,237.2 104.0,236.2 105.9,235.5 107.0,235.7 110.0,236.4 112.6,236.9 113.0,237.0 116.0,237.7 117.7,238.1 119.0,238.1 122.0,238.1 125.0,238.1 128.0,238.1 131.0,238.1 134.0,239.5 134.6,239.8 137.0,238.6 138.0,238.1 140.0,238.1 143.0,238.1 146.0,238.1 148.0,238.1 149.0,238.8 152.0,240.7 152.3,240.9 155.0,240.2 156.5,239.8 158.0,239.8 161.0,239.8 164.0,239.8 165.0,239.8 167.0,240.6 170.0,241.9 173.0,239.3 173.4,238.9 176.0,238.9 179.0,238.9 182.0,238.9 185.0,238.9 188.0,240.6 188.6,240.9 191.0,240.5 192.0,240.3 194.0,240.3 197.0,240.3 198.8,240.3 200.0,240.7 203.0,241.8 206.0,243.0 206.4,243.1 209.0,241.6 212.0,239.8 214.0,238.6 215.0,238.5 218.0,238.4 221.0,238.2 224.0,238.1 225.8,240.6 227.0,240.0 230.0,238.6 231.0,238.1 233.0,237.9 236.0,237.6 239.0,237.3 240.0,237.2 242.0,237.9 245.0,238.9 248.0,237.9 250.0,237.2 251.0,237.2 254.0,237.0 257.0,236.9 260.0,238.1 262.0,238.9 263.0,238.5 265.0,237.6 266.0,237.6 269.0,237.5 272.0,237.4 275.0,237.3 278.0,237.3 280.0,237.2 281.0,237.0 284.0,236.4 287.0,235.9 289.0,235.5 290.0,235.8 293.0,236.5 296.0,237.3 297.0,237.6 299.0,237.6 302.0,237.6 305.0,237.6 308.0,237.6 311.0,237.6 314.0,237.6 315.0,237.6 317.0,239.1 318.0,239.8 320.0,239.0 322.0,238.1 323.0,238.1 326.0,238.3 329.0,238.4 332.0,238.6 333.0,238.6 335.0,240.1 336.0,240.9 338.0,240.3 341.0,239.3 344.0,239.6 347.0,239.8 350.0,240.1 352.0,240.3 353.0,241.0 355.0,242.3 356.0,241.2 358.0,238.9 359.0,239.0 362.0,239.2 365.0,239.4 368.0,239.7 370.0,239.8 371.0,240.2 373.0,240.9 374.0,240.9 377.0,240.8 380.0,240.7 383.0,240.7 385.0,240.6 386.0,241.1 389.0,242.6 390.0,243.1 392.0,242.2 395.0,240.9 398.0,240.2 401.0,239.5 404.0,238.8 405.0,238.6 407.0,239.9 408.0,240.6 410.0,239.5 412.0,238.4 413.0,238.3 416.0,238.2 419.0,238.0 422.0,237.8 425.0,237.6 427.0,239.8 428.0,239.4 431.0,238.0 432.0,237.6 434.0,237.5 437.0,237.5 440.0,237.4 443.0,238.7 444.0,239.1 446.0,238.3 447.0,237.9 449.0,237.9 452.0,237.9 455.0,237.9 456.0,237.9 457.0,234.0 458.0,234.1 461.0,234.4 462.0,229.5 464.0,229.8 465.0,224.9 467.0,225.1 469.0,225.3 470.0,220.0 473.0,220.0 473.4,220.0 474.4,215.1 476.0,215.1 477.8,215.1 478.8,210.1 479.0,210.1 482.0,210.1 482.1,210.1 483.1,205.8 485.0,205.8 487.1,205.8 488.0,201.3 488.1,200.8 491.0,200.8 492.0,200.8 493.0,196.5 494.0,196.5 496.4,196.5 497.0,194.8 497.4,193.7 500.0,193.7 500.7,193.7 501.7,188.8 503.0,188.8 505.7,188.8 506.0,187.5 506.7,184.4 509.0,184.4 510.6,184.4 511.6,179.5 512.0,179.5 515.0,179.5 516.0,177.3 518.0,177.3 519.3,177.3 520.3,169.7 521.0,169.7 523.7,169.7 524.0,168.7 524.7,166.4 527.0,166.4 528.6,166.4 529.6,162.0 530.0,162.0 533.0,162.0 533.6,162.0 534.6,158.7 536.0,158.6 537.4,158.4 538.4,151.8 539.0,151.8 542.0,151.4 542.3,151.4 543.3,149.7 545.0,149.5 548.0,149.2 551.0,149.2 551.5,149.2 554.0,151.1 555.0,151.9 557.0,151.9 560.0,151.9 563.0,151.9 565.0,151.9 566.0,152.5 568.4,153.9 569.0,154.2 572.0,155.4 573.4,156.0 575.0,155.3 578.0,153.9 580.0,153.0 581.0,153.1 584.0,153.2 587.0,153.3 590.0,153.4 592.0,153.5 593.0,152.3 593.7,151.4 596.0,151.6 599.0,151.7 602.0,151.9 605.0,152.1 607.0,152.2 608.0,153.2 610.0,155.2 611.0,155.0 614.0,154.5 617.0,154.0 620.0,153.4 622.4,153.0 623.0,153.2 626.0,154.0 629.0,154.7 632.0,154.6 635.0,154.5 638.0,154.3 640.0,154.2 641.0,154.1 644.0,153.9 647.0,153.6 650.0,153.3 653.0,153.1 653.5,153.0 656.0,153.3 659.0,153.5 660.0,153.6 662.0,153.7 665.0,153.7 668.0,153.8 671.0,153.8 674.0,153.8 677.0,153.9 680.0,153.9 680.5,153.9 683.0,156.4 686.0,155.0 686.5,154.7 689.0,154.8 692.0,155.0 695.0,155.1 698.0,155.2 699.0,155.3 701.0,157.4 701.7,158.2 703.3,150.1 704.0,150.2 707.0,150.6 710.0,151.1 713.0,151.5 716.0,152.0 717.7,152.3 719.0,153.0 720.0,153.7 722.0,151.7 722.8,151.0 725.0,151.2 728.0,151.5 731.0,151.8 734.0,152.1 736.0,152.3 737.0,152.4 740.0,152.7 743.0,153.0 746.0,153.4 749.0,153.7 751.5,154.0 752.0,154.2 755.0,155.6 755.7,156.0 758.0,154.2 759.0,153.5 761.0,153.0 764.0,152.4 767.0,151.8 768.4,151.5 770.0,152.2 773.0,153.4 774.3,154.0 776.0,152.3 776.8,151.5 779.0,151.1 782.0,150.5 785.0,150.0 788.0,149.4 788.6,149.3 791.0,157.5 791.2,158.2 793.7,155.7 794.0,155.7 797.0,155.6 800.0,155.5 803.0,155.4 806.0,155.4 809.0,155.3 811.5,157.9 812.0,157.6 814.0,156.5 815.0,156.5 818.0,156.4 821.0,156.3 824.0,156.2 827.0,156.1 829.2,156.0 830.0,155.9 833.0,155.6 836.0,155.2 839.0,154.9 840.0,154.8 842.0,155.6 845.0,156.7 846.8,157.4 848.0,157.5 851.0,157.6 854.0,157.7 857.0,157.9 860.0,158.0 863.0,158.2 863.6,158.2 866.0,159.4 869.0,158.0 869.6,157.7 872.0,157.9 875.0,158.1 878.0,158.4 881.0,158.6 882.0,158.7 884.0,160.1 884.8,160.7 887.0,159.3 888.0,158.7 890.0,159.0 893.0,159.3 896.0,159.7 899.0,160.1 901.7,160.4 902.0,160.3 905.0,158.7 908.0,158.6 911.0,158.4 914.0,158.2 914.3,158.2 917.0,159.1 920.0,160.1 921.0,160.4 923.0,160.1 926.0,159.7 929.0,159.2 929.5,159.1 932.0,160.0 935.0,161.1 938.0,162.2 939.7,162.8 941.0,161.9 944.0,159.9 946.4,158.2 947.0,158.2 950.0,158.2 953.0,158.2 954.9,158.2 956.0,159.0 958.2,160.4 959.0,160.0 962.0,158.5 965.0,157.0 968.0,157.0 971.0,157.0 973.4,157.0 974.0,157.5 976.0,159.1 977.0,158.5 980.0,156.7 980.2,156.5 983.0,156.4 986.0,156.3 989.0,156.2 992.0,156.0 994.6,157.4 995.0,157.4 998.0,156.9 1000.0,156.6 1001.0,156.5 1004.0,156.3 1007.0,156.1 1010.0,156.0 1013.0,155.8 1015.2,155.7 1016.0,155.1 1019.0,153.2 1022.0,153.3 1025.0,153.5 1028.0,153.6 1030.4,153.8 1031.0,153.7 1034.0,153.6 1037.0,153.5 1040.0,153.4 1043.0,153.3 1046.0,153.2 1046.9,153.2 1049.0,154.8 1049.4,155.1 1052.0,151.3 1055.0,150.4 1057.0,149.8 1058.0,149.8 1061.0,150.0 1064.0,150.2 1064.6,150.3 1067.0,151.0 1067.8,151.3 1070.0,150.5 1073.0,149.5 1074.7,149.0 1076.0,149.0 1079.0,149.1 1082.0,149.2 1085.0,149.3 1087.4,149.4 1088.0,146.7 1088.7,143.7 1091.0,142.5 1093.0,141.4 1094.0,141.4 1097.0,141.5 1100.0,141.6 1103.0,141.8 1103.9,141.8 1106.0,142.6 1107.0,143.0 1109.0,142.5 1111.5,141.8 1112.0,142.0 1115.0,143.1 1116.6,143.7 1118.0,144.2 1121.0,145.2 1122.3,145.6 1124.0,144.6 1126.7,143.0 1127.0,142.7 1129.9,140.1 1130.0,140.1 1133.0,140.0 1136.0,140.0 1138.7,139.9 1139.0,140.6 1140.0,143.0 1142.0,143.0 1145.0,143.0 1146.0,143.0" fill="none" stroke="#6d5aa0" stroke-width="1" stroke-opacity="0.45" stroke-linejoin="round"/><polyline points="47.0,236.7 50.0,236.7 53.0,236.7 56.0,236.7 58.0,236.7 59.0,237.4 60.3,238.4 62.0,237.1 63.6,235.8 65.0,235.8 68.0,235.8 71.0,235.8 73.8,235.8 74.0,235.9 77.0,236.9 78.9,237.5 80.0,237.0 82.0,236.2 83.0,236.2 86.0,236.2 89.0,236.2 92.0,236.2 95.0,236.2 95.7,236.2 98.0,236.6 98.3,236.7 101.0,235.8 104.0,234.8 105.9,234.1 107.0,234.3 110.0,235.0 112.6,235.5 113.0,235.6 116.0,236.3 117.7,236.7 119.0,236.7 122.0,236.7 125.0,236.7 128.0,236.7 131.0,236.7 134.0,238.1 134.6,238.4 137.0,237.2 138.0,236.7 140.0,236.7 143.0,236.7 146.0,236.7 148.0,236.7 149.0,237.4 152.0,239.3 152.3,239.5 155.0,238.8 156.5,238.4 158.0,238.4 161.0,238.4 164.0,238.4 165.0,238.4 167.0,239.2 170.0,240.5 173.0,237.9 173.4,237.5 176.0,237.5 179.0,237.5 182.0,237.5 185.0,237.5 188.0,239.2 188.6,239.5 191.0,239.1 192.0,238.9 194.0,238.9 197.0,238.9 198.8,238.9 200.0,239.3 203.0,240.4 206.0,241.6 206.4,241.7 209.0,240.2 212.0,238.4 214.0,237.2 215.0,237.1 218.0,237.0 221.0,236.8 224.0,236.7 225.8,239.2 227.0,238.6 230.0,237.2 231.0,236.7 233.0,236.5 236.0,236.2 239.0,235.9 240.0,235.8 242.0,236.5 245.0,237.5 248.0,236.5 250.0,235.8 251.0,235.8 254.0,235.6 257.0,235.5 260.0,236.7 262.0,237.5 263.0,237.1 265.0,236.2 266.0,236.2 269.0,236.1 272.0,236.0 275.0,235.9 278.0,235.9 280.0,235.8 281.0,235.6 284.0,235.0 287.0,234.5 289.0,234.1 290.0,234.4 293.0,235.1 296.0,235.9 297.0,236.2 299.0,236.2 302.0,236.2 305.0,236.2 308.0,236.2 311.0,236.2 314.0,236.2 315.0,236.2 317.0,237.7 318.0,238.4 320.0,237.6 322.0,236.7 323.0,236.7 326.0,236.9 329.0,237.0 332.0,237.2 333.0,237.2 335.0,238.7 336.0,239.5 338.0,238.9 341.0,237.9 344.0,238.2 347.0,238.4 350.0,238.7 352.0,238.9 353.0,239.6 355.0,240.9 356.0,239.8 358.0,237.5 359.0,237.6 362.0,237.8 365.0,238.0 368.0,238.2 370.0,238.4 371.0,238.8 373.0,239.5 374.0,239.5 377.0,239.4 380.0,239.3 383.0,239.2 385.0,239.2 386.0,239.7 389.0,241.2 390.0,241.7 392.0,240.8 395.0,239.5 398.0,238.8 401.0,238.1 404.0,237.4 405.0,237.2 407.0,238.5 408.0,239.2 410.0,238.1 412.0,237.0 413.0,236.9 416.0,236.8 419.0,236.6 422.0,236.4 425.0,236.2 427.0,238.4 428.0,238.0 431.0,236.6 432.0,236.2 434.0,236.1 437.0,236.1 440.0,236.0 443.0,237.3 444.0,237.7 446.0,236.9 447.0,236.5 449.0,236.5 452.0,236.5 455.0,236.5 456.0,236.5 457.0,232.6 458.0,232.7 461.0,233.0 462.0,228.1 464.0,228.4 465.0,223.5 467.0,223.7 469.0,223.9 470.0,218.6 473.0,218.6 473.4,218.6 474.4,213.7 476.0,213.7 477.8,213.7 478.8,208.7 479.0,208.7 482.0,208.7 482.1,208.7 483.1,204.4 485.0,204.4 487.1,204.4 488.0,199.9 488.1,199.4 491.0,199.4 492.0,199.4 493.0,195.1 494.0,195.1 496.4,195.1 497.0,193.4 497.4,192.3 500.0,192.3 500.7,192.3 501.7,187.4 503.0,187.4 505.7,187.4 506.0,186.1 506.7,183.0 509.0,183.0 510.6,183.0 511.6,178.1 512.0,178.1 515.0,178.1 516.0,175.9 518.0,175.9 519.3,175.9 520.3,168.3 521.0,168.3 523.7,168.3 524.0,167.3 524.7,165.0 527.0,165.0 528.6,165.0 529.6,160.6 530.0,160.6 533.0,160.6 533.6,160.6 534.6,157.3 536.0,157.2 537.4,157.0 538.4,150.4 539.0,150.4 542.0,150.0 542.3,150.0 543.3,148.3 545.0,148.1 548.0,147.8 551.0,147.8 551.5,147.8 554.0,149.7 555.0,150.5 557.0,150.5 560.0,150.5 563.0,150.5 565.0,150.5 566.0,151.1 568.4,152.5 569.0,152.8 572.0,154.0 573.4,154.6 575.0,153.9 578.0,152.5 580.0,151.6 581.0,151.7 584.0,151.8 587.0,151.9 590.0,152.0 592.0,152.1 593.0,150.9 593.7,150.0 596.0,150.2 599.0,150.3 602.0,150.5 605.0,150.7 607.0,150.8 608.0,151.8 610.0,153.8 611.0,153.6 614.0,153.1 617.0,152.6 620.0,152.0 622.4,151.6 623.0,151.8 626.0,152.6 629.0,153.3 632.0,153.2 635.0,153.1 638.0,152.9 640.0,152.8 641.0,152.7 644.0,152.5 647.0,152.2 650.0,151.9 653.0,151.7 653.5,151.6 656.0,151.9 659.0,152.1 660.0,152.2 662.0,152.3 665.0,152.3 668.0,152.4 671.0,152.4 674.0,152.4 677.0,152.5 680.0,152.5 680.5,152.5 683.0,155.0 686.0,153.6 686.5,153.3 689.0,153.4 692.0,153.6 695.0,153.7 698.0,153.8 699.0,153.9 701.0,156.0 701.7,156.8 703.3,148.7 704.0,148.8 707.0,149.2 710.0,149.7 713.0,150.1 716.0,150.6 717.7,150.9 719.0,151.6 720.0,152.3 722.0,150.3 722.8,149.6 725.0,149.8 728.0,150.1 731.0,150.4 734.0,150.7 736.0,150.9 737.0,151.0 740.0,151.3 743.0,151.6 746.0,152.0 749.0,152.3 751.5,152.6 752.0,152.8 755.0,154.2 755.7,154.6 758.0,152.8 759.0,152.1 761.0,151.6 764.0,151.0 767.0,150.4 768.4,150.1 770.0,150.8 773.0,152.0 774.3,152.6 776.0,150.9 776.8,150.1 779.0,149.7 782.0,149.1 785.0,148.6 788.0,148.0 788.6,147.9 791.0,156.1 791.2,156.8 793.7,154.3 794.0,154.3 797.0,154.2 800.0,154.1 803.0,154.0 806.0,154.0 809.0,153.9 811.5,156.5 812.0,156.2 814.0,155.1 815.0,155.1 818.0,155.0 821.0,154.9 824.0,154.8 827.0,154.7 829.2,154.6 830.0,154.5 833.0,154.2 836.0,153.8 839.0,153.5 840.0,153.4 842.0,154.2 845.0,155.3 846.8,156.0 848.0,156.1 851.0,156.2 854.0,156.3 857.0,156.5 860.0,156.6 863.0,156.8 863.6,156.8 866.0,158.0 869.0,156.6 869.6,156.3 872.0,156.5 875.0,156.7 878.0,157.0 881.0,157.2 882.0,157.3 884.0,158.7 884.8,159.3 887.0,157.9 888.0,157.3 890.0,157.6 893.0,157.9 896.0,158.3 899.0,158.7 901.7,159.0 902.0,158.9 905.0,157.3 908.0,157.2 911.0,157.0 914.0,156.8 914.3,156.8 917.0,157.7 920.0,158.7 921.0,159.0 923.0,158.7 926.0,158.3 929.0,157.8 929.5,157.7 932.0,158.6 935.0,159.7 938.0,160.8 939.7,161.4 941.0,160.5 944.0,158.5 946.4,156.8 947.0,156.8 950.0,156.8 953.0,156.8 954.9,156.8 956.0,157.6 958.2,159.0 959.0,158.6 962.0,157.1 965.0,155.6 968.0,155.6 971.0,155.6 973.4,155.6 974.0,156.1 976.0,157.7 977.0,157.1 980.0,155.3 980.2,155.1 983.0,155.0 986.0,154.9 989.0,154.8 992.0,154.6 994.6,156.0 995.0,156.0 998.0,155.5 1000.0,155.2 1001.0,155.1 1004.0,154.9 1007.0,154.7 1010.0,154.6 1013.0,154.4 1015.2,154.3 1016.0,153.7 1019.0,151.8 1022.0,151.9 1025.0,152.1 1028.0,152.2 1030.4,152.4 1031.0,152.3 1034.0,152.2 1037.0,152.1 1040.0,152.0 1043.0,151.9 1046.0,151.8 1046.9,151.8 1049.0,153.4 1049.4,153.7 1052.0,149.9 1055.0,149.0 1057.0,148.4 1058.0,148.4 1061.0,148.6 1064.0,148.8 1064.6,148.9 1067.0,149.6 1067.8,149.9 1070.0,149.1 1073.0,148.1 1074.7,147.6 1076.0,147.6 1079.0,147.7 1082.0,147.8 1085.0,147.9 1087.4,148.0 1088.0,145.3 1088.7,142.3 1091.0,141.1 1093.0,140.0 1094.0,140.0 1097.0,140.1 1100.0,140.2 1103.0,140.4 1103.9,140.4 1106.0,141.2 1107.0,141.6 1109.0,141.1 1111.5,140.4 1112.0,140.6 1115.0,141.7 1116.6,142.3 1118.0,142.8 1121.0,143.8 1122.3,144.2 1124.0,143.2 1126.7,141.6 1127.0,141.3 1129.9,138.7 1130.0,138.7 1133.0,138.6 1136.0,138.6 1138.7,138.5 1139.0,139.2 1140.0,141.6 1142.0,141.6 1145.0,141.6 1146.0,141.6" fill="none" stroke="#5e9c4a" stroke-width="2" stroke-linejoin="round"/><polyline points="47.0,226.2 50.0,226.2 53.0,226.2 56.0,226.2 58.0,226.2 59.0,226.9 60.3,227.9 62.0,226.6 63.6,225.3 65.0,225.3 68.0,225.3 71.0,225.3 73.8,225.3 74.0,225.4 77.0,226.4 78.9,227.0 80.0,226.5 82.0,225.7 83.0,225.7 86.0,225.7 89.0,225.7 92.0,225.7 95.0,225.7 95.7,225.7 98.0,226.1 98.3,226.2 101.0,225.3 104.0,224.2 105.9,223.6 107.0,223.8 110.0,224.5 112.6,225.0 113.0,225.1 116.0,225.8 117.7,226.2 119.0,226.2 122.0,226.2 125.0,226.2 128.0,226.2 131.0,226.2 134.0,227.6 134.6,227.9 137.0,226.7 138.0,226.2 140.0,226.2 143.0,226.2 146.0,226.2 148.0,226.2 149.0,226.9 152.0,228.8 152.3,229.0 155.0,228.3 156.5,227.9 158.0,227.9 161.0,227.9 164.0,227.9 165.0,227.9 167.0,228.7 170.0,230.0 173.0,227.4 173.4,227.0 176.0,227.0 179.0,227.0 182.0,227.0 185.0,227.0 188.0,228.7 188.6,229.0 191.0,228.6 192.0,228.4 194.0,228.4 197.0,228.4 198.8,228.4 200.0,228.8 203.0,229.9 206.0,231.1 206.4,231.2 209.0,229.7 212.0,227.9 214.0,226.7 215.0,226.6 218.0,226.5 221.0,226.3 224.0,226.2 225.8,228.7 227.0,228.1 230.0,226.7 231.0,226.2 233.0,226.0 236.0,225.7 239.0,225.4 240.0,225.3 242.0,226.0 245.0,227.0 248.0,226.0 250.0,225.3 251.0,225.3 254.0,225.1 257.0,225.0 260.0,226.2 262.0,227.0 263.0,226.6 265.0,225.7 266.0,225.7 269.0,225.6 272.0,225.5 275.0,225.4 278.0,225.4 280.0,225.3 281.0,225.1 284.0,224.5 287.0,224.0 289.0,223.6 290.0,223.9 293.0,224.6 296.0,225.4 297.0,225.7 299.0,225.7 302.0,225.7 305.0,225.7 308.0,225.7 311.0,225.7 314.0,225.7 315.0,225.7 317.0,227.2 318.0,227.9 320.0,227.1 322.0,226.2 323.0,226.2 326.0,226.4 329.0,226.5 332.0,226.7 333.0,226.7 335.0,228.2 336.0,229.0 338.0,228.4 341.0,227.4 344.0,227.7 347.0,227.9 350.0,228.2 352.0,228.4 353.0,229.1 355.0,230.4 356.0,229.3 358.0,227.0 359.0,227.1 362.0,227.3 365.0,227.5 368.0,227.8 370.0,227.9 371.0,228.3 373.0,229.0 374.0,229.0 377.0,228.9 380.0,228.8 383.0,228.8 385.0,228.7 386.0,229.2 389.0,230.7 390.0,231.2 392.0,230.3 395.0,229.0 398.0,228.3 401.0,227.6 404.0,226.9 405.0,226.7 407.0,228.0 408.0,228.7 410.0,227.6 412.0,226.5 413.0,226.4 416.0,226.3 419.0,226.1 422.0,225.9 425.0,225.7 427.0,227.9 428.0,227.5 431.0,226.1 432.0,225.7 434.0,225.6 437.0,225.6 440.0,225.5 443.0,226.8 444.0,227.2 446.0,226.4 447.0,226.0 449.0,226.0 452.0,226.0 455.0,226.0 456.0,226.0 457.0,222.0 458.0,222.0 461.0,222.0 462.0,217.0 464.0,217.0 465.0,212.0 467.0,212.0 469.0,212.0 470.0,206.6 473.0,206.6 473.4,206.6 474.4,201.7 476.0,201.7 477.8,201.7 478.8,196.7 479.0,196.7 482.0,196.7 482.1,196.7 483.1,192.4 485.0,192.4 487.1,192.4 488.0,187.9 488.1,187.4 491.0,187.4 492.0,187.4 493.0,183.1 494.0,183.1 496.4,183.1 497.0,181.4 497.4,180.3 500.0,180.3 500.7,180.3 501.7,175.4 503.0,175.4 505.7,175.4 506.0,174.1 506.7,171.0 509.0,171.0 510.6,171.0 511.6,166.1 512.0,166.1 515.0,166.1 516.0,163.9 518.0,163.9 519.3,163.9 520.3,156.3 521.0,156.3 523.7,156.3 524.0,155.3 524.7,153.0 527.0,153.0 528.6,153.0 529.6,148.6 530.0,148.6 533.0,148.6 533.6,148.6 534.6,145.3 536.0,145.3 537.4,145.3 538.4,138.8 539.0,138.8 542.0,138.8 542.3,138.8 543.3,137.2 545.0,137.2 548.0,137.2 551.0,137.2 551.5,137.2 554.0,139.1 555.0,139.9 557.0,139.9 560.0,139.9 563.0,139.9 565.0,139.9 566.0,140.5 568.4,141.9 569.0,142.2 572.0,143.4 573.4,144.0 575.0,143.3 578.0,141.9 580.0,141.0 581.0,141.0 584.0,141.2 587.0,141.3 590.0,141.4 592.0,141.5 593.0,140.3 593.7,139.4 596.0,139.5 599.0,139.7 602.0,139.9 605.0,140.1 607.0,140.2 608.0,141.2 610.0,143.2 611.0,143.0 614.0,142.5 617.0,142.0 620.0,141.4 622.4,141.0 623.0,141.2 626.0,141.9 629.0,142.7 632.0,142.6 635.0,142.4 638.0,142.3 640.0,142.2 641.0,142.1 644.0,141.8 647.0,141.6 650.0,141.3 653.0,141.0 653.5,141.0 656.0,141.2 659.0,141.5 660.0,141.6 662.0,141.6 665.0,141.7 668.0,141.7 671.0,141.8 674.0,141.8 677.0,141.8 680.0,141.9 680.5,141.9 683.0,144.4 686.0,142.9 686.5,142.7 689.0,142.8 692.0,142.9 695.0,143.0 698.0,143.2 699.0,143.2 701.0,145.3 701.7,146.1 703.3,138.0 704.0,138.1 707.0,138.6 710.0,139.0 713.0,139.5 716.0,139.9 717.7,140.2 719.0,141.0 720.0,141.6 722.0,139.7 722.8,138.9 725.0,139.1 728.0,139.4 731.0,139.7 734.0,140.0 736.0,140.2 737.0,140.3 740.0,140.6 743.0,141.0 746.0,141.3 749.0,141.6 751.5,141.9 752.0,142.1 755.0,143.6 755.7,143.9 758.0,142.2 759.0,141.4 761.0,141.0 764.0,140.3 767.0,139.7 768.4,139.4 770.0,140.1 773.0,141.3 774.3,141.9 776.0,140.2 776.8,139.4 779.0,139.0 782.0,138.4 785.0,137.9 788.0,137.3 788.6,137.2 791.0,145.4 791.2,146.1 793.7,143.6 794.0,143.6 797.0,143.5 800.0,143.4 803.0,143.4 806.0,143.3 809.0,143.2 811.5,145.8 812.0,145.5 814.0,144.4 815.0,144.4 818.0,144.3 821.0,144.2 824.0,144.1 827.0,144.0 829.2,143.9 830.0,143.8 833.0,143.5 836.0,143.1 839.0,142.8 840.0,142.7 842.0,143.5 845.0,144.6 846.8,145.3 848.0,145.4 851.0,145.5 854.0,145.6 857.0,145.8 860.0,145.9 863.0,146.1 863.6,146.1 866.0,147.3 869.0,145.9 869.6,145.6 872.0,145.8 875.0,146.0 878.0,146.3 881.0,146.5 882.0,146.6 884.0,148.0 884.8,148.6 887.0,147.2 888.0,146.6 890.0,146.8 893.0,147.2 896.0,147.6 899.0,148.0 901.7,148.3 902.0,148.1 905.0,146.6 908.0,146.4 911.0,146.3 914.0,146.1 914.3,146.1 917.0,147.0 920.0,148.0 921.0,148.3 923.0,148.0 926.0,147.5 929.0,147.1 929.5,147.0 932.0,147.9 935.0,149.0 938.0,150.1 939.7,150.7 941.0,149.8 944.0,147.7 946.4,146.1 947.0,146.1 950.0,146.1 953.0,146.1 954.9,146.1 956.0,146.8 958.2,148.3 959.0,147.9 962.0,146.4 965.0,144.9 968.0,144.9 971.0,144.9 973.4,144.9 974.0,145.4 976.0,147.0 977.0,146.4 980.0,144.5 980.2,144.4 983.0,144.3 986.0,144.2 989.0,144.0 992.0,143.9 994.6,145.3 995.0,145.2 998.0,144.7 1000.0,144.4 1001.0,144.3 1004.0,144.2 1007.0,144.0 1010.0,143.8 1013.0,143.6 1015.2,143.5 1016.0,143.0 1019.0,141.0 1022.0,141.2 1025.0,141.3 1028.0,141.5 1030.4,141.6 1031.0,141.6 1034.0,141.5 1037.0,141.4 1040.0,141.3 1043.0,141.1 1046.0,141.0 1046.9,141.0 1049.0,142.6 1049.4,142.9 1052.0,139.1 1055.0,138.2 1057.0,137.6 1058.0,137.7 1061.0,137.9 1064.0,138.1 1064.6,138.1 1067.0,138.9 1067.8,139.1 1070.0,138.4 1073.0,137.4 1074.7,136.8 1076.0,136.8 1079.0,136.9 1082.0,137.0 1085.0,137.1 1087.4,137.2 1088.0,134.6 1088.7,131.5 1091.0,130.3 1093.0,129.2 1094.0,129.2 1097.0,129.3 1100.0,129.5 1103.0,129.6 1103.9,129.6 1106.0,130.4 1107.0,130.8 1109.0,130.3 1111.5,129.6 1112.0,129.8 1115.0,130.9 1116.6,131.5 1118.0,132.0 1121.0,133.0 1122.3,133.4 1124.0,132.4 1126.7,130.8 1127.0,130.5 1129.9,127.9 1130.0,127.9 1133.0,127.8 1136.0,127.8 1138.7,127.7 1139.0,128.4 1140.0,130.8 1142.0,130.8 1145.0,130.8 1146.0,130.8" fill="none" stroke="#d6aa02" stroke-width="2" stroke-linejoin="round"/><polygon points="454.0,522.5 454.0,521.7 479.7,521.7 489.2,387.2 490.8,386.2 644.5,386.2 646.5,390.3 651.0,522.0 651.0,522.5" fill="rgb(204,163,0)" fill-opacity="0.1"/><polygon points="480.3,522.0 484.7,483.5 489.8,442.0 508.0,441.4 512.7,479.9 539.5,479.9 544.5,491.0 644.9,491.0 646.5,493.7 650.0,522.0" fill="rgb(80,134,66)" fill-opacity="0.1"/><polyline points="480.3,522.0 484.7,483.5 489.8,442.0 508.0,441.4 512.7,479.9 539.5,479.9 544.5,491.0 644.9,491.0 646.5,493.7 650.0,522.0" fill="none" stroke="#508642" stroke-width="2" stroke-linejoin="round"/><polyline points="454.0,521.7 479.7,521.7 489.2,387.2 490.8,386.2 644.5,386.2 646.5,390.3 651.0,522.0 660.0,522.0" fill="none" stroke="#cca300" stroke-width="2" stroke-linejoin="round"/><polyline points="1022.0,522.0 1146.0,522.0" fill="none" stroke="#eab839" stroke-width="1.6"/><line x1="44" y1="523" x2="1146" y2="523" stroke="#f9ba8f" stroke-width="2"/><polygon points="78.5,816.0 78.2,674.8 81.3,675.2 84.5,676.9 89.8,679.4 96.1,680.7 98.2,681.5 114.0,681.1 117.2,682.8 122.5,683.2 124.6,684.9 133.0,684.9 136.2,686.4 139.4,687.0 143.6,689.6 151.0,689.6 154.2,691.2 159.5,691.2 162.6,692.7 171.1,692.7 176.4,697.0 180.6,697.6 183.7,699.1 197.5,699.1 201.7,701.2 205.9,705.0 217.5,705.0 221.7,710.3 252.4,710.3 256.6,713.2 260.8,716.6 266.1,716.6 269.3,718.3 284.0,718.3 287.2,719.8 290.4,720.2 293.5,721.7 331.9,721.7 335.1,722.8 340.3,722.8 343.5,724.7 353.0,724.7 358.3,729.1 361.5,730.2 363.6,732.7 367.8,732.7 373.1,737.2 382.6,737.2 385.7,740.1 391.0,740.5 393.5,745.0 413.2,745.0 416.4,746.9 423.7,746.9 428.0,750.3 435.4,750.3 437.5,754.5 441.7,759.8 455.4,759.8 460.7,765.5 463.9,766.5 479.7,779.2 494.5,779.2 496.2,780.7 499.1,772.4 502.9,772.8 506.1,774.3 512.4,779.2 515.2,782.3 521.9,782.3 525.1,784.0 534.6,784.0 536.7,785.5 548.3,785.5 550.4,787.0 556.8,787.0 561.5,790.4 561.5,816.0" fill="rgb(126,178,109)" fill-opacity="0.1"/><polyline points="78.2,674.8 81.3,675.2 84.5,676.9 89.8,679.4 96.1,680.7 98.2,681.5 114.0,681.1 117.2,682.8 122.5,683.2 124.6,684.9 133.0,684.9 136.2,686.4 139.4,687.0 143.6,689.6 151.0,689.6 154.2,691.2 159.5,691.2 162.6,692.7 171.1,692.7 176.4,697.0 180.6,697.6 183.7,699.1 197.5,699.1 201.7,701.2 205.9,705.0 217.5,705.0 221.7,710.3 252.4,710.3 256.6,713.2 260.8,716.6 266.1,716.6 269.3,718.3 284.0,718.3 287.2,719.8 290.4,720.2 293.5,721.7 331.9,721.7 335.1,722.8 340.3,722.8 343.5,724.7 353.0,724.7 358.3,729.1 361.5,730.2 363.6,732.7 367.8,732.7 373.1,737.2 382.6,737.2 385.7,740.1 391.0,740.5 393.5,745.0 413.2,745.0 416.4,746.9 423.7,746.9 428.0,750.3 435.4,750.3 437.5,754.5 441.7,759.8 455.4,759.8 460.7,765.5 463.9,766.5 479.7,779.2 494.5,779.2 496.2,780.7 499.1,772.4 502.9,772.8 506.1,774.3 512.4,779.2 515.2,782.3 521.9,782.3 525.1,784.0 534.6,784.0 536.7,785.5 548.3,785.5 550.4,787.0 556.8,787.0 561.5,790.4" fill="none" stroke="#7eb26d" stroke-width="2" stroke-linejoin="round"/><polygon points="634.0,816.0 634.0,803.2 636.8,803.2 637.8,801.0 639.9,800.5 641.6,801.1 644.4,801.1 645.4,802.3 648.2,802.3 649.2,802.2 652.0,802.2 653.0,802.7 655.8,802.7 656.8,802.8 658.5,802.7 660.6,802.6 663.4,802.6 664.4,803.7 666.3,803.7 667.3,805.4 671.0,805.4 672.0,806.2 676.2,806.2 677.2,806.0 679.4,808.2 682.4,808.2 683.4,807.8 686.1,807.8 687.1,808.2 690.0,808.2 691.0,806.9 692.7,806.9 693.7,806.7 697.1,806.7 698.1,808.2 701.4,808.2 702.4,807.4 705.9,807.4 706.9,804.9 709.0,804.9 710.0,804.5 712.8,804.5 713.8,804.6 715.6,803.8 717.6,803.1 720.4,803.1 721.4,802.2 723.4,802.2 724.4,801.0 728.0,801.0 729.0,801.3 732.2,801.3 733.2,802.7 735.6,802.7 736.6,802.8 739.4,802.8 740.4,803.0 742.0,802.3 744.2,803.3 747.0,803.3 748.0,805.2 749.8,805.2 750.8,806.0 754.6,806.0 755.6,806.3 758.4,806.3 759.4,805.3 761.8,806.0 765.1,806.0 766.1,808.2 769.8,808.2 770.8,808.6 773.9,808.6 774.9,808.2 777.4,808.2 778.4,807.7 782.7,807.7 783.7,806.7 786.0,806.2 788.8,806.2 789.8,805.5 791.5,805.5 792.5,806.0 795.9,806.0 796.9,803.8 800.2,803.8 801.2,803.5 804.0,803.5 805.0,802.0 809.1,802.0 810.1,801.0 812.6,801.7 815.4,801.7 816.4,802.6 820.0,802.6 821.0,802.7 822.6,798.4 825.5,798.4 826.5,786.9 828.8,786.9 829.8,762.1 832.2,757.7 834.6,751.9 837.0,747.5 839.8,747.5 840.8,739.0 843.2,739.0 844.2,732.2 846.6,728.2 848.6,728.2 849.6,721.5 851.4,715.9 853.8,706.4 856.2,698.2 858.5,698.2 859.5,687.4 861.4,687.4 862.4,686.0 865.0,686.0 866.0,685.3 869.4,685.3 870.4,686.8 871.1,703.9 873.8,703.9 874.8,705.0 879.3,705.0 880.3,701.3 884.0,701.3 885.0,699.8 887.2,698.5 889.6,698.5 890.6,702.1 895.2,702.1 896.2,700.3 898.0,700.3 899.0,701.7 903.0,701.7 904.0,702.1 905.6,702.1 906.6,701.8 909.4,701.8 910.4,701.9 913.1,701.9 914.1,701.4 917.6,701.4 918.6,703.6 920.8,703.6 921.8,704.4 924.6,704.4 925.6,706.0 927.5,706.6 929.4,706.0 933.2,706.0 934.2,705.2 936.0,708.1 937.6,699.8 939.8,699.8 940.8,699.7 943.6,699.7 944.6,700.2 948.9,700.2 949.9,700.3 952.2,701.0 954.4,701.4 956.0,701.7 958.8,701.7 959.8,700.4 962.3,700.4 963.3,699.2 965.6,696.9 967.4,697.3 970.2,697.3 971.2,696.5 973.5,696.5 974.5,695.4 976.8,694.7 977.9,700.7 981.6,700.7 982.6,701.9 984.7,701.9 985.7,701.4 989.2,701.4 990.2,702.0 993.0,702.0 994.0,701.5 998.1,701.5 999.1,702.5 1001.6,704.2 1004.4,704.2 1005.4,706.0 1007.0,705.9 1009.2,706.8 1012.0,706.8 1013.0,706.7 1015.8,706.7 1016.8,707.4 1019.3,707.4 1022.8,707.4 1023.8,709.7 1027.2,709.7 1028.2,708.9 1031.0,708.9 1032.0,709.7 1036.2,709.7 1037.2,708.8 1039.6,708.2 1042.4,708.2 1043.4,706.6 1046.2,706.6 1047.2,705.1 1049.6,705.1 1050.6,704.8 1053.8,704.8 1054.8,705.0 1057.6,705.0 1058.6,704.9 1061.4,704.9 1062.4,703.1 1064.0,703.6 1066.4,703.6 1067.4,701.4 1069.0,701.4 1070.0,702.1 1072.8,702.1 1073.8,701.7 1076.6,701.7 1077.6,701.6 1080.9,701.6 1081.9,702.5 1084.2,702.5 1085.2,702.9 1088.0,702.9 1089.0,704.5 1091.8,704.5 1092.8,705.5 1096.6,705.5 1097.6,705.9 1099.4,705.9 1100.4,705.7 1103.2,705.7 1104.2,707.3 1107.0,707.3 1108.0,707.1 1112.3,707.1 1113.3,708.8 1115.6,708.8 1118.4,708.8 1119.4,707.5 1122.2,707.5 1123.2,707.8 1125.7,707.8 1126.7,706.6 1129.8,706.6 1130.8,705.7 1134.7,705.7 1135.7,703.0 1137.4,703.0 1138.4,703.0 1141.2,703.0 1142.2,703.8 1144.5,703.8 1145.5,703.0 1145.5,816.0" fill="rgb(191,131,142)" fill-opacity="0.1"/><polygon points="634.0,816.0 634.0,810.5 637.0,811.1 640.0,811.0 643.0,810.6 646.0,810.8 649.0,810.8 652.0,810.9 655.0,811.0 658.0,810.5 661.0,810.4 664.0,811.1 667.0,810.7 670.0,811.0 673.0,810.4 676.0,810.8 679.0,811.0 682.0,810.6 685.0,811.2 688.0,811.1 691.0,810.4 694.0,810.4 697.0,810.8 700.0,811.2 703.0,810.7 706.0,810.6 709.0,810.7 711.0,810.4 712.0,809.6 715.0,809.8 718.0,809.8 721.0,809.6 724.0,809.6 727.0,809.6 730.0,809.8 733.0,809.6 736.0,809.4 739.0,810.1 742.0,809.8 745.0,809.9 748.0,809.5 751.0,810.2 752.0,811.3 754.0,810.7 757.0,810.9 760.0,811.2 763.0,811.2 766.0,811.3 769.0,810.9 772.0,811.3 775.0,811.1 778.0,810.8 779.0,809.4 781.0,809.6 784.0,809.6 787.0,809.3 790.0,809.4 793.0,808.9 796.0,809.1 799.0,809.5 802.0,809.2 805.0,809.0 808.0,809.3 811.0,809.5 814.0,809.4 817.0,809.2 819.0,809.3 820.0,809.6 823.0,810.8 826.0,811.5 829.0,811.4 832.0,811.5 835.0,811.1 838.0,811.1 841.0,811.7 844.0,811.9 847.0,811.6 850.0,811.4 853.0,811.2 856.0,811.5 859.0,811.9 862.0,811.7 865.0,811.5 868.0,811.8 871.0,811.3 874.0,811.5 877.0,811.9 880.0,811.6 883.0,811.5 886.0,811.3 889.0,811.5 892.0,811.9 895.0,811.1 898.0,811.7 901.0,811.8 904.0,811.8 907.0,811.7 910.0,811.7 913.0,811.5 916.0,811.5 919.0,811.4 922.0,811.1 925.0,811.8 928.0,811.6 931.0,811.3 934.0,811.5 937.0,811.5 940.0,811.4 943.0,811.4 946.0,811.5 949.0,811.6 952.0,811.6 955.0,811.5 958.0,811.1 961.0,811.3 964.0,811.2 967.0,811.6 970.0,811.8 973.0,811.7 974.0,811.7 976.0,811.7 979.0,811.3 982.0,811.8 985.0,811.6 988.0,811.1 991.0,811.1 994.0,811.1 997.0,811.7 1000.0,811.3 1003.0,811.1 1006.0,811.5 1009.0,811.3 1012.0,811.1 1015.0,811.2 1018.0,811.4 1021.0,811.2 1024.0,811.2 1027.0,811.6 1030.0,811.4 1033.0,811.3 1036.0,811.4 1039.0,811.0 1042.0,811.3 1045.0,811.3 1048.0,811.1 1051.0,811.1 1054.0,811.7 1057.0,811.4 1060.0,811.1 1063.0,811.4 1066.0,811.6 1069.0,811.0 1072.0,810.9 1075.0,811.0 1078.0,811.5 1081.0,811.0 1084.0,811.5 1087.0,811.4 1090.0,811.3 1093.0,811.1 1096.0,811.7 1099.0,811.5 1102.0,811.3 1105.0,811.0 1108.0,811.4 1111.0,811.2 1114.0,811.3 1117.0,811.1 1120.0,811.3 1123.0,810.9 1126.0,811.1 1129.0,811.6 1132.0,811.5 1135.0,811.1 1138.0,811.5 1141.0,811.1 1144.0,811.6 1145.5,811.4 1145.5,816.0" fill="rgb(120,110,200)" fill-opacity="0.22"/><polygon points="634.0,816.0 634.0,812.9 637.0,812.8 640.0,812.6 643.0,813.3 646.0,812.6 649.0,813.3 652.0,813.4 655.0,813.1 658.0,812.7 661.0,813.3 664.0,813.4 667.0,813.2 670.0,813.0 673.0,812.9 676.0,812.9 679.0,812.8 682.0,813.1 685.0,812.9 688.0,812.8 691.0,812.7 694.0,813.1 697.0,812.8 700.0,813.0 703.0,812.9 706.0,813.3 709.0,813.3 712.0,812.6 715.0,812.8 718.0,812.9 721.0,813.4 724.0,813.2 727.0,812.9 730.0,812.8 733.0,813.1 736.0,813.3 739.0,813.3 742.0,812.9 745.0,813.3 748.0,813.1 751.0,813.0 754.0,813.4 757.0,812.8 760.0,813.2 763.0,812.7 766.0,812.7 769.0,813.3 772.0,812.8 775.0,813.2 778.0,813.1 781.0,813.3 784.0,812.9 787.0,812.9 790.0,812.8 793.0,813.1 796.0,812.8 799.0,812.9 800.0,812.8 802.0,812.2 805.0,812.5 808.0,812.2 811.0,812.1 814.0,812.2 817.0,812.8 820.0,812.7 823.0,812.8 826.0,812.4 829.0,812.6 832.0,812.7 835.0,812.4 838.0,812.6 841.0,812.3 844.0,812.2 847.0,812.3 850.0,812.8 853.0,812.5 856.0,812.8 859.0,812.4 862.0,812.3 865.0,812.7 868.0,812.7 871.0,812.0 874.0,812.5 877.0,812.1 880.0,812.1 883.0,812.7 886.0,812.0 889.0,812.1 892.0,812.7 895.0,812.2 898.0,812.0 901.0,812.0 904.0,812.0 907.0,812.4 910.0,811.9 913.0,812.5 916.0,812.1 919.0,812.6 922.0,812.5 925.0,812.0 928.0,811.9 931.0,812.1 934.0,811.8 937.0,812.2 940.0,811.7 943.0,811.7 946.0,812.4 949.0,811.9 952.0,812.1 955.0,812.0 958.0,811.9 960.0,811.7 961.0,812.1 964.0,811.3 967.0,810.5 970.0,809.0 973.0,808.3 975.0,808.1 976.0,808.4 979.0,808.0 982.0,808.1 985.0,808.1 988.0,807.8 991.0,808.0 994.0,807.8 997.0,807.8 1000.0,807.6 1003.0,807.8 1006.0,808.3 1009.0,807.9 1012.0,808.1 1015.0,808.0 1018.0,808.3 1021.0,807.8 1024.0,807.8 1027.0,807.8 1030.0,807.8 1033.0,808.2 1036.0,808.2 1039.0,807.7 1042.0,807.7 1045.0,807.9 1048.0,807.9 1051.0,807.9 1054.0,807.7 1057.0,807.5 1060.0,807.6 1063.0,807.5 1066.0,807.9 1069.0,807.5 1072.0,807.5 1075.0,807.9 1078.0,807.7 1081.0,808.0 1084.0,807.8 1087.0,808.1 1090.0,807.5 1093.0,807.8 1096.0,808.0 1099.0,807.4 1102.0,808.1 1105.0,807.5 1108.0,808.0 1111.0,808.1 1114.0,808.0 1117.0,807.6 1120.0,807.4 1123.0,807.8 1126.0,808.1 1129.0,807.6 1132.0,808.0 1135.0,807.4 1138.0,808.0 1141.0,807.3 1144.0,807.6 1145.5,808.0 1145.5,816.0" fill="rgb(110,208,224)" fill-opacity="0.12"/><polyline points="634.0,812.9 637.0,812.8 640.0,812.6 643.0,813.3 646.0,812.6 649.0,813.3 652.0,813.4 655.0,813.1 658.0,812.7 661.0,813.3 664.0,813.4 667.0,813.2 670.0,813.0 673.0,812.9 676.0,812.9 679.0,812.8 682.0,813.1 685.0,812.9 688.0,812.8 691.0,812.7 694.0,813.1 697.0,812.8 700.0,813.0 703.0,812.9 706.0,813.3 709.0,813.3 712.0,812.6 715.0,812.8 718.0,812.9 721.0,813.4 724.0,813.2 727.0,812.9 730.0,812.8 733.0,813.1 736.0,813.3 739.0,813.3 742.0,812.9 745.0,813.3 748.0,813.1 751.0,813.0 754.0,813.4 757.0,812.8 760.0,813.2 763.0,812.7 766.0,812.7 769.0,813.3 772.0,812.8 775.0,813.2 778.0,813.1 781.0,813.3 784.0,812.9 787.0,812.9 790.0,812.8 793.0,813.1 796.0,812.8 799.0,812.9 800.0,812.8 802.0,812.2 805.0,812.5 808.0,812.2 811.0,812.1 814.0,812.2 817.0,812.8 820.0,812.7 823.0,812.8 826.0,812.4 829.0,812.6 832.0,812.7 835.0,812.4 838.0,812.6 841.0,812.3 844.0,812.2 847.0,812.3 850.0,812.8 853.0,812.5 856.0,812.8 859.0,812.4 862.0,812.3 865.0,812.7 868.0,812.7 871.0,812.0 874.0,812.5 877.0,812.1 880.0,812.1 883.0,812.7 886.0,812.0 889.0,812.1 892.0,812.7 895.0,812.2 898.0,812.0 901.0,812.0 904.0,812.0 907.0,812.4 910.0,811.9 913.0,812.5 916.0,812.1 919.0,812.6 922.0,812.5 925.0,812.0 928.0,811.9 931.0,812.1 934.0,811.8 937.0,812.2 940.0,811.7 943.0,811.7 946.0,812.4 949.0,811.9 952.0,812.1 955.0,812.0 958.0,811.9 960.0,811.7 961.0,812.1 964.0,811.3 967.0,810.5 970.0,809.0 973.0,808.3 975.0,808.1 976.0,808.4 979.0,808.0 982.0,808.1 985.0,808.1 988.0,807.8 991.0,808.0 994.0,807.8 997.0,807.8 1000.0,807.6 1003.0,807.8 1006.0,808.3 1009.0,807.9 1012.0,808.1 1015.0,808.0 1018.0,808.3 1021.0,807.8 1024.0,807.8 1027.0,807.8 1030.0,807.8 1033.0,808.2 1036.0,808.2 1039.0,807.7 1042.0,807.7 1045.0,807.9 1048.0,807.9 1051.0,807.9 1054.0,807.7 1057.0,807.5 1060.0,807.6 1063.0,807.5 1066.0,807.9 1069.0,807.5 1072.0,807.5 1075.0,807.9 1078.0,807.7 1081.0,808.0 1084.0,807.8 1087.0,808.1 1090.0,807.5 1093.0,807.8 1096.0,808.0 1099.0,807.4 1102.0,808.1 1105.0,807.5 1108.0,808.0 1111.0,808.1 1114.0,808.0 1117.0,807.6 1120.0,807.4 1123.0,807.8 1126.0,808.1 1129.0,807.6 1132.0,808.0 1135.0,807.4 1138.0,808.0 1141.0,807.3 1144.0,807.6 1145.5,808.0" fill="none" stroke="#6ed0e0" stroke-width="1.5"/><polyline points="634.0,813.5 637.0,813.6 640.0,813.6 643.0,813.5 646.0,813.5 649.0,813.0 652.0,813.2 655.0,813.0 658.0,813.5 661.0,813.4 664.0,813.1 667.0,813.0 670.0,813.7 673.0,813.5 676.0,813.3 679.0,813.3 682.0,813.6 685.0,813.3 688.0,813.2 691.0,813.2 694.0,813.1 697.0,812.9 700.0,813.4 703.0,813.2 706.0,813.4 709.0,812.9 712.0,813.2 715.0,813.0 718.0,813.0 721.0,813.1 724.0,813.6 727.0,813.2 730.0,813.2 733.0,813.4 736.0,813.1 739.0,812.9 742.0,813.3 745.0,813.3 748.0,813.4 751.0,813.3 754.0,813.4 757.0,813.5 760.0,813.1 763.0,813.3 766.0,813.3 769.0,813.1 772.0,813.2 775.0,813.3 778.0,813.6 781.0,813.6 784.0,813.1 787.0,813.4 790.0,812.9 793.0,813.0 796.0,813.3 799.0,813.6 802.0,813.0 805.0,813.5 808.0,813.6 811.0,813.1 814.0,813.5 817.0,813.6 820.0,813.2 823.0,813.5 826.0,813.5 829.0,813.4 832.0,813.6 835.0,813.6 838.0,813.7 841.0,813.4 844.0,813.0 847.0,813.1 850.0,813.1 853.0,813.4 856.0,813.5 859.0,812.9 862.0,813.4 865.0,813.5 868.0,813.2 871.0,813.3 874.0,813.0 877.0,813.5 880.0,812.9 883.0,813.7 886.0,813.5 889.0,813.4 892.0,813.1 895.0,813.6 898.0,813.7 901.0,813.0 904.0,813.5 907.0,813.6 910.0,813.4 913.0,813.5 916.0,813.3 919.0,813.6 922.0,813.7 925.0,813.2 928.0,813.5 931.0,813.2 934.0,813.0 937.0,813.2 940.0,813.0 943.0,813.6 946.0,813.7 949.0,813.0 952.0,813.4 955.0,813.2 958.0,813.0 960.0,813.1 961.0,812.9 964.0,812.8 967.0,811.6 970.0,811.2 973.0,810.8 975.0,810.1 976.0,810.6 979.0,810.6 982.0,810.8 985.0,810.2 988.0,810.3 991.0,810.5 994.0,810.3 997.0,810.5 1000.0,810.3 1003.0,810.6 1006.0,810.7 1009.0,810.7 1012.0,810.8 1015.0,810.5 1018.0,810.4 1021.0,810.7 1024.0,810.6 1027.0,810.5 1030.0,810.3 1033.0,810.2 1036.0,810.1 1039.0,810.6 1042.0,810.1 1045.0,810.6 1048.0,810.4 1051.0,810.7 1054.0,810.6 1057.0,810.7 1060.0,810.1 1063.0,810.3 1066.0,810.4 1069.0,810.2 1072.0,810.3 1075.0,810.2 1078.0,810.3 1081.0,809.9 1084.0,810.3 1087.0,810.3 1090.0,810.1 1093.0,810.2 1096.0,810.5 1099.0,810.4 1102.0,810.3 1105.0,810.4 1108.0,810.2 1111.0,810.0 1114.0,809.9 1117.0,810.1 1120.0,810.3 1123.0,810.5 1126.0,810.5 1129.0,810.2 1132.0,810.6 1135.0,810.2 1138.0,810.5 1141.0,810.1 1144.0,810.4 1145.5,810.6" fill="none" stroke="#1f78c1" stroke-width="2" stroke-opacity="0.85"/><polyline points="634.0,812.1 637.0,812.0 640.0,812.3 643.0,812.2 646.0,812.1 649.0,811.9 652.0,812.1 655.0,812.2 658.0,812.1 661.0,812.4 664.0,812.3 667.0,812.3 670.0,812.4 673.0,812.3 676.0,812.2 679.0,812.3 682.0,812.3 685.0,812.3 688.0,812.3 691.0,812.1 694.0,812.3 697.0,812.3 700.0,812.5 703.0,812.4 706.0,812.4 709.0,812.4 712.0,812.4 715.0,812.3 718.0,812.1 721.0,812.1 724.0,812.3 727.0,812.4 730.0,812.2 733.0,812.0 736.0,812.4 739.0,812.2 742.0,812.2 745.0,811.9 748.0,812.2 751.0,812.3 754.0,812.2 757.0,812.1 760.0,812.3 763.0,811.9 766.0,812.2 769.0,812.5 772.0,812.3 775.0,812.1 778.0,812.3 781.0,812.3 784.0,812.0 787.0,812.0 790.0,812.4 793.0,812.1 796.0,811.9 799.0,812.4 802.0,812.2 805.0,812.1 808.0,812.2 811.0,812.3 814.0,812.0 817.0,812.3 820.0,812.3 823.0,812.4 826.0,812.1 829.0,812.3 832.0,812.0 835.0,812.2 838.0,812.0 841.0,812.4 844.0,812.4 847.0,812.1 850.0,812.0 853.0,812.5 856.0,812.3 859.0,812.4 862.0,811.9 865.0,812.4 868.0,812.3 871.0,812.1 874.0,812.2 877.0,812.4 880.0,812.4 883.0,812.0 886.0,812.3 889.0,812.0 892.0,812.5 895.0,812.2 898.0,812.4 901.0,812.3 904.0,812.3 907.0,812.1 910.0,812.2 913.0,812.0 916.0,812.0 919.0,812.3 922.0,812.1 925.0,812.4 928.0,812.0 931.0,812.3 934.0,812.3 937.0,812.1 940.0,812.0 943.0,812.1 946.0,812.2 949.0,812.0 952.0,812.0 955.0,811.9 958.0,812.3 960.0,812.4 961.0,812.1 964.0,812.0 967.0,812.5 970.0,812.7 973.0,812.8 976.0,812.7 979.0,812.6 982.0,813.0 985.0,812.6 988.0,813.1 990.0,812.8 991.0,812.9 994.0,813.0 997.0,812.9 1000.0,812.8 1003.0,812.8 1006.0,813.2 1009.0,813.0 1012.0,813.0 1015.0,812.8 1018.0,813.1 1021.0,812.9 1024.0,813.1 1027.0,813.2 1030.0,813.3 1033.0,812.7 1036.0,813.2 1039.0,813.2 1042.0,812.9 1045.0,812.9 1048.0,813.0 1051.0,813.3 1054.0,812.9 1057.0,813.2 1060.0,813.2 1063.0,812.8 1066.0,813.2 1069.0,812.7 1072.0,812.8 1075.0,813.1 1078.0,812.7 1081.0,812.9 1084.0,812.8 1087.0,813.0 1090.0,813.2 1093.0,813.2 1096.0,812.7 1099.0,812.7 1102.0,813.2 1105.0,812.7 1108.0,812.9 1111.0,812.8 1114.0,812.8 1117.0,812.7 1120.0,813.1 1123.0,813.1 1126.0,813.1 1129.0,813.2 1132.0,813.1 1135.0,812.9 1138.0,813.1 1141.0,813.3 1144.0,813.1 1145.5,812.8" fill="none" stroke="#ef843c" stroke-width="1" stroke-opacity="0.6"/><polyline points="634.0,810.5 637.0,811.1 640.0,811.0 643.0,810.6 646.0,810.8 649.0,810.8 652.0,810.9 655.0,811.0 658.0,810.5 661.0,810.4 664.0,811.1 667.0,810.7 670.0,811.0 673.0,810.4 676.0,810.8 679.0,811.0 682.0,810.6 685.0,811.2 688.0,811.1 691.0,810.4 694.0,810.4 697.0,810.8 700.0,811.2 703.0,810.7 706.0,810.6 709.0,810.7 711.0,810.4 712.0,809.6 715.0,809.8 718.0,809.8 721.0,809.6 724.0,809.6 727.0,809.6 730.0,809.8 733.0,809.6 736.0,809.4 739.0,810.1 742.0,809.8 745.0,809.9 748.0,809.5 751.0,810.2 752.0,811.3 754.0,810.7 757.0,810.9 760.0,811.2 763.0,811.2 766.0,811.3 769.0,810.9 772.0,811.3 775.0,811.1 778.0,810.8 779.0,809.4 781.0,809.6 784.0,809.6 787.0,809.3 790.0,809.4 793.0,808.9 796.0,809.1 799.0,809.5 802.0,809.2 805.0,809.0 808.0,809.3 811.0,809.5 814.0,809.4 817.0,809.2 819.0,809.3 820.0,809.6 823.0,810.8 826.0,811.5 829.0,811.4 832.0,811.5 835.0,811.1 838.0,811.1 841.0,811.7 844.0,811.9 847.0,811.6 850.0,811.4 853.0,811.2 856.0,811.5 859.0,811.9 862.0,811.7 865.0,811.5 868.0,811.8 871.0,811.3 874.0,811.5 877.0,811.9 880.0,811.6 883.0,811.5 886.0,811.3 889.0,811.5 892.0,811.9 895.0,811.1 898.0,811.7 901.0,811.8 904.0,811.8 907.0,811.7 910.0,811.7 913.0,811.5 916.0,811.5 919.0,811.4 922.0,811.1 925.0,811.8 928.0,811.6 931.0,811.3 934.0,811.5 937.0,811.5 940.0,811.4 943.0,811.4 946.0,811.5 949.0,811.6 952.0,811.6 955.0,811.5 958.0,811.1 961.0,811.3 964.0,811.2 967.0,811.6 970.0,811.8 973.0,811.7 974.0,811.7 976.0,811.7 979.0,811.3 982.0,811.8 985.0,811.6 988.0,811.1 991.0,811.1 994.0,811.1 997.0,811.7 1000.0,811.3 1003.0,811.1 1006.0,811.5 1009.0,811.3 1012.0,811.1 1015.0,811.2 1018.0,811.4 1021.0,811.2 1024.0,811.2 1027.0,811.6 1030.0,811.4 1033.0,811.3 1036.0,811.4 1039.0,811.0 1042.0,811.3 1045.0,811.3 1048.0,811.1 1051.0,811.1 1054.0,811.7 1057.0,811.4 1060.0,811.1 1063.0,811.4 1066.0,811.6 1069.0,811.0 1072.0,810.9 1075.0,811.0 1078.0,811.5 1081.0,811.0 1084.0,811.5 1087.0,811.4 1090.0,811.3 1093.0,811.1 1096.0,811.7 1099.0,811.5 1102.0,811.3 1105.0,811.0 1108.0,811.4 1111.0,811.2 1114.0,811.3 1117.0,811.1 1120.0,811.3 1123.0,810.9 1126.0,811.1 1129.0,811.6 1132.0,811.5 1135.0,811.1 1138.0,811.5 1141.0,811.1 1144.0,811.6 1145.5,811.4" fill="none" stroke="#705da0" stroke-width="2"/><line x1="634" y1="816" x2="1145.5" y2="816" stroke="#e24d42" stroke-width="1.8"/><polyline points="827.6,765.4 828.7,783.0" fill="none" stroke="#ba43a9" stroke-width="2"/><polyline points="868.8,687.4 869.3,703.9" fill="none" stroke="#ba43a9" stroke-width="2"/><polyline points="634.0,803.2 636.8,803.2 637.8,801.0 639.9,800.5 641.6,801.1 644.4,801.1 645.4,802.3 648.2,802.3 649.2,802.2 652.0,802.2 653.0,802.7 655.8,802.7 656.8,802.8 658.5,802.7 660.6,802.6 663.4,802.6 664.4,803.7 666.3,803.7 667.3,805.4 671.0,805.4 672.0,806.2 676.2,806.2 677.2,806.0 679.4,808.2 682.4,808.2 683.4,807.8 686.1,807.8 687.1,808.2 690.0,808.2 691.0,806.9 692.7,806.9 693.7,806.7 697.1,806.7 698.1,808.2 701.4,808.2 702.4,807.4 705.9,807.4 706.9,804.9 709.0,804.9 710.0,804.5 712.8,804.5 713.8,804.6 715.6,803.8 717.6,803.1 720.4,803.1 721.4,802.2 723.4,802.2 724.4,801.0 728.0,801.0 729.0,801.3 732.2,801.3 733.2,802.7 735.6,802.7 736.6,802.8 739.4,802.8 740.4,803.0 742.0,802.3 744.2,803.3 747.0,803.3 748.0,805.2 749.8,805.2 750.8,806.0 754.6,806.0 755.6,806.3 758.4,806.3 759.4,805.3 761.8,806.0 765.1,806.0 766.1,808.2 769.8,808.2 770.8,808.6 773.9,808.6 774.9,808.2 777.4,808.2 778.4,807.7 782.7,807.7 783.7,806.7 786.0,806.2 788.8,806.2 789.8,805.5 791.5,805.5 792.5,806.0 795.9,806.0 796.9,803.8 800.2,803.8 801.2,803.5 804.0,803.5 805.0,802.0 809.1,802.0 810.1,801.0 812.6,801.7 815.4,801.7 816.4,802.6 820.0,802.6 821.0,802.7 822.6,798.4 825.5,798.4 826.5,786.9 828.8,786.9 829.8,762.1 832.2,757.7 834.6,751.9 837.0,747.5 839.8,747.5 840.8,739.0 843.2,739.0 844.2,732.2 846.6,728.2 848.6,728.2 849.6,721.5 851.4,715.9 853.8,706.4 856.2,698.2 858.5,698.2 859.5,687.4 861.4,687.4 862.4,686.0 865.0,686.0 866.0,685.3 869.4,685.3 870.4,686.8 871.1,703.9 873.8,703.9 874.8,705.0 879.3,705.0 880.3,701.3 884.0,701.3 885.0,699.8 887.2,698.5 889.6,698.5 890.6,702.1 895.2,702.1 896.2,700.3 898.0,700.3 899.0,701.7 903.0,701.7 904.0,702.1 905.6,702.1 906.6,701.8 909.4,701.8 910.4,701.9 913.1,701.9 914.1,701.4 917.6,701.4 918.6,703.6 920.8,703.6 921.8,704.4 924.6,704.4 925.6,706.0 927.5,706.6 929.4,706.0 933.2,706.0 934.2,705.2 936.0,708.1 937.6,699.8 939.8,699.8 940.8,699.7 943.6,699.7 944.6,700.2 948.9,700.2 949.9,700.3 952.2,701.0 954.4,701.4 956.0,701.7 958.8,701.7 959.8,700.4 962.3,700.4 963.3,699.2 965.6,696.9 967.4,697.3 970.2,697.3 971.2,696.5 973.5,696.5 974.5,695.4 976.8,694.7 977.9,700.7 981.6,700.7 982.6,701.9 984.7,701.9 985.7,701.4 989.2,701.4 990.2,702.0 993.0,702.0 994.0,701.5 998.1,701.5 999.1,702.5 1001.6,704.2 1004.4,704.2 1005.4,706.0 1007.0,705.9 1009.2,706.8 1012.0,706.8 1013.0,706.7 1015.8,706.7 1016.8,707.4 1019.3,707.4 1022.8,707.4 1023.8,709.7 1027.2,709.7 1028.2,708.9 1031.0,708.9 1032.0,709.7 1036.2,709.7 1037.2,708.8 1039.6,708.2 1042.4,708.2 1043.4,706.6 1046.2,706.6 1047.2,705.1 1049.6,705.1 1050.6,704.8 1053.8,704.8 1054.8,705.0 1057.6,705.0 1058.6,704.9 1061.4,704.9 1062.4,703.1 1064.0,703.6 1066.4,703.6 1067.4,701.4 1069.0,701.4 1070.0,702.1 1072.8,702.1 1073.8,701.7 1076.6,701.7 1077.6,701.6 1080.9,701.6 1081.9,702.5 1084.2,702.5 1085.2,702.9 1088.0,702.9 1089.0,704.5 1091.8,704.5 1092.8,705.5 1096.6,705.5 1097.6,705.9 1099.4,705.9 1100.4,705.7 1103.2,705.7 1104.2,707.3 1107.0,707.3 1108.0,707.1 1112.3,707.1 1113.3,708.8 1115.6,708.8 1118.4,708.8 1119.4,707.5 1122.2,707.5 1123.2,707.8 1125.7,707.8 1126.7,706.6 1129.8,706.6 1130.8,705.7 1134.7,705.7 1135.7,703.0 1137.4,703.0 1138.4,703.0 1141.2,703.0 1142.2,703.8 1144.5,703.8 1145.5,703.0" fill="none" stroke="#508642" stroke-width="2" stroke-linejoin="round"/></svg><div class="legend" style="left:55px;top:284px;width:1100px"><div class="li" style="margin-right:9.17px"><div class="sw" style="background:#7eb26d"></div>/</div><div class="li" style="margin-right:9.17px"><div class="sw" style="background:#eab839"></div>/alerts</div><div class="li" style="margin-right:9.17px"><div class="sw" style="background:#6ed0e0"></div>/api/metrics</div><div class="li" style="margin-right:9.17px"><div class="sw" style="background:#ef843c"></div>/api/query</div><div class="li" style="margin-right:9.17px"><div class="sw" style="background:#e24d42"></div>/api/query_range</div><div class="li" style="margin-right:9.17px"><div class="sw" style="background:#1f78c1"></div>/consoles/</div><div class="li" style="margin-right:9.17px"><div class="sw" style="background:#ba43a9"></div>/graph</div><div class="li" style="margin-right:9.17px"><div class="sw" style="background:#705da0"></div>/heap</div><div class="li" style="margin-right:9.17px"><div class="sw" style="background:#508642"></div>/static/</div><div class="li" style="margin-right:9.17px"><div class="sw" style="background:#cca300"></div>prometheus</div></div><div class="legend" style="left:55px;top:551px;width:1100px"><div class="li" style="margin-right:8.85px"><div class="sw" style="background:#7eb26d"></div>0.9 /</div><div class="li" style="margin-right:8.85px"><div class="sw" style="background:#eab839"></div>0.99 /</div><div class="li" style="margin-right:8.85px"><div class="sw" style="background:#6ed0e0"></div>0.9 /alerts</div><div class="li" style="margin-right:8.85px"><div class="sw" style="background:#ef843c"></div>0.99 /alerts</div><div class="li" style="margin-right:8.85px"><div class="sw" style="background:#e24d42"></div>0.9 /api/metrics</div><div class="li" style="margin-right:8.85px"><div class="sw" style="background:#1f78c1"></div>0.99 /api/metrics</div><div class="li" style="margin-right:8.85px"><div class="sw" style="background:#ba43a9"></div>0.9 /api/query</div><div class="li" style="margin-right:8.85px"><div class="sw" style="background:#705da0"></div>0.99 /api/query</div><div class="li" style="margin-right:8.85px"><div class="sw" style="background:#508642"></div>0.9 /api/query_range</div><div class="li" style="margin-right:8.85px"><div class="sw" style="background:#cca300"></div>0.99 /api/query_range</div><div class="li" style="margin-right:8.85px"><div class="sw" style="background:#447ebc"></div>0.9 /consoles/</div><div class="li" style="margin-right:8.85px"><div class="sw" style="background:#c15c17"></div>0.99 /consoles/</div><div class="li" style="margin-right:8.85px"><div class="sw" style="background:#890f02"></div>0.9 /graph</div><div class="li" style="margin-right:8.85px"><div class="sw" style="background:#0a437c"></div>0.99 /graph</div><div class="li" style="margin-right:8.85px"><div class="sw" style="background:#6d1f62"></div>0.9 /heap</div><div class="li" style="margin-right:8.85px"><div class="sw" style="background:#584477"></div>0.99 /heap</div><div class="li" style="margin-right:8.85px"><div class="sw" style="background:#b7dbab"></div>0.9 /static/</div><div class="li" style="margin-right:8.85px"><div class="sw" style="background:#f4d598"></div>0.99 /static/</div><div class="li" style="margin-right:8.85px"><div class="sw" style="background:#70dbed"></div>0.9 prometheus</div><div class="li" style="margin-right:8.85px"><div class="sw" style="background:#f9ba8f"></div>0.99 prometheus</div></div><div class="legend" style="left:55px;top:844px;width:520px"><div class="li" style="margin-right:9px"><div class="sw" style="background:#7eb26d"></div>localhost:9090 prometheus</div></div><div class="legend" style="left:639px;top:844px;width:520px"><div class="li" style="margin-right:9.25px"><div class="sw" style="background:#7eb26d"></div>clone</div><div class="li" style="margin-right:9.25px"><div class="sw" style="background:#eab839"></div>create</div><div class="li" style="margin-right:9.25px"><div class="sw" style="background:#6ed0e0"></div>drop</div><div class="li" style="margin-right:9.25px"><div class="sw" style="background:#ef843c"></div>evict</div><div class="li" style="margin-right:9.25px"><div class="sw" style="background:#e24d42"></div>load</div><div class="li" style="margin-right:9.25px"><div class="sw" style="background:#1f78c1"></div>persist</div><div class="li" style="margin-right:9.25px"><div class="sw" style="background:#ba43a9"></div>pin</div><div class="li" style="margin-right:9.25px"><div class="sw" style="background:#705da0"></div>transcode</div><div class="li" style="margin-right:9.25px"><div class="sw" style="background:#508642"></div>unpin</div></div><div class="abs" style="left:1077px;top:883px;width:90px;height:24px;background:#9933cc;border-radius:3px"></div><svg class="abs" style="left:1087px;top:890px" width="10" height="10"><path d="M3.5 0h3v3.5h3.5v3h-3.5v3.5h-3v-3.5h-3.5v-3h3.5z" fill="#fff"/></svg><div class="abs" style="left:1100px;top:888px;font-size:12px;color:#fff;line-height:15px">ADD ROW</div><svg class="abs" style="left:0;top:0;will-change:transform" width="1184" height="914"><g font-size="11.5" fill="#c8c8c8"><text x="42.5" y="99.6" text-anchor="end">2.0</text><text x="42.5" y="139.6" text-anchor="end">1.5</text><text x="42.5" y="179.6" text-anchor="end">1.0</text><text x="42.5" y="219.6" text-anchor="end">0.5</text><text x="42.5" y="259.6" text-anchor="end">0</text><text x="98.5" y="274.8" text-anchor="middle">20:30</text><text x="189.5" y="274.8" text-anchor="middle">20:35</text><text x="281.5" y="274.8" text-anchor="middle">20:40</text><text x="372.5" y="274.8" text-anchor="middle">20:45</text><text x="464.5" y="274.8" text-anchor="middle">20:50</text><text x="556.5" y="274.8" text-anchor="middle">20:55</text><text x="647.5" y="274.8" text-anchor="middle">21:00</text><text x="739.5" y="274.8" text-anchor="middle">21:05</text><text x="830.5" y="274.8" text-anchor="middle">21:10</text><text x="922.5" y="274.8" text-anchor="middle">21:15</text><text x="1014.5" y="274.8" text-anchor="middle">21:20</text><text x="1105.5" y="274.8" text-anchor="middle">21:25</text><text x="39.5" y="366.6" text-anchor="end">80</text><text x="39.5" y="406.6" text-anchor="end">60</text><text x="39.5" y="446.6" text-anchor="end">40</text><text x="39.5" y="486.6" text-anchor="end">20</text><text x="39.5" y="526.6" text-anchor="end">0</text><text x="89.5" y="541.8" text-anchor="middle">20:30</text><text x="181.5" y="541.8" text-anchor="middle">20:35</text><text x="272.5" y="541.8" text-anchor="middle">20:40</text><text x="364.5" y="541.8" text-anchor="middle">20:45</text><text x="456.5" y="541.8" text-anchor="middle">20:50</text><text x="548.5" y="541.8" text-anchor="middle">20:55</text><text x="640.5" y="541.8" text-anchor="middle">21:00</text><text x="732.5" y="541.8" text-anchor="middle">21:05</text><text x="823.5" y="541.8" text-anchor="middle">21:10</text><text x="915.5" y="541.8" text-anchor="middle">21:15</text><text x="1007.5" y="541.8" text-anchor="middle">21:20</text><text x="1099.5" y="541.8" text-anchor="middle">21:25</text><text x="73.5" y="659.6" text-anchor="end">125.08 K</text><text x="73.5" y="691.6" text-anchor="end">125.06 K</text><text x="73.5" y="723.6" text-anchor="end">125.04 K</text><text x="73.5" y="755.6" text-anchor="end">125.02 K</text><text x="73.5" y="787.6" text-anchor="end">125.00 K</text><text x="73.5" y="819.6" text-anchor="end">124.98 K</text><text x="100.5" y="834.8" text-anchor="middle">20:30</text><text x="181.5" y="834.8" text-anchor="middle">20:40</text><text x="261.5" y="834.8" text-anchor="middle">20:50</text><text x="342.5" y="834.8" text-anchor="middle">21:00</text><text x="423.5" y="834.8" text-anchor="middle">21:10</text><text x="503.5" y="834.8" text-anchor="middle">21:20</text><text x="629.5" y="659.6" text-anchor="end">800</text><text x="629.5" y="699.6" text-anchor="end">600</text><text x="629.5" y="739.6" text-anchor="end">400</text><text x="629.5" y="779.6" text-anchor="end">200</text><text x="629.5" y="819.6" text-anchor="end">0</text><text x="655.5" y="834.8" text-anchor="middle">20:30</text><text x="740.5" y="834.8" text-anchor="middle">20:40</text><text x="825.5" y="834.8" text-anchor="middle">20:50</text><text x="911.5" y="834.8" text-anchor="middle">21:00</text><text x="996.5" y="834.8" text-anchor="middle">21:10</text><text x="1081.5" y="834.8" text-anchor="middle">21:20</text></g></svg></body></html>
